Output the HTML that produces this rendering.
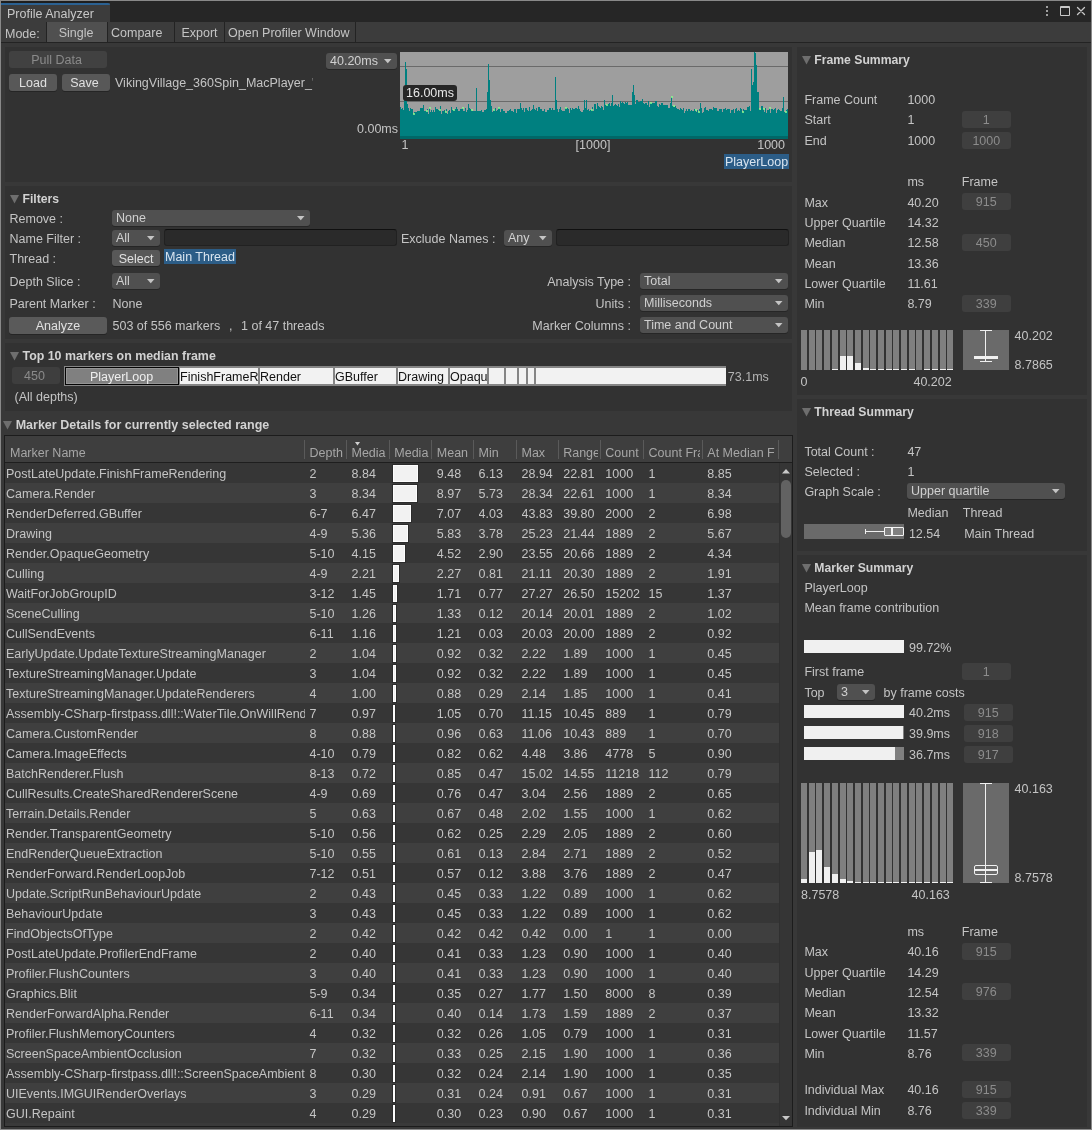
<!DOCTYPE html><html><head><meta charset="utf-8"><style>
html,body{margin:0;padding:0;}
body{width:1092px;height:1130px;position:relative;overflow:hidden;background:#383838;font-family:"Liberation Sans",sans-serif;}
.t{position:absolute;white-space:pre;line-height:14px;font-family:"Liberation Sans",sans-serif;}
body{will-change:transform;}
.r{position:absolute;}
</style></head><body>
<div class="r" style="left:0px;top:0px;width:1092px;height:1130px;background:#898989;"></div>
<div class="r" style="left:1px;top:1px;width:1090px;height:1128px;background:#383838;"></div>
<div class="r" style="left:1px;top:1px;width:1090px;height:21px;background:#262626;"></div>
<div class="r" style="left:1px;top:1px;width:109px;height:21px;background:#3c3c3c;"></div>
<div class="r" style="left:1px;top:1px;width:109px;height:2px;background:#1e1e1e;"></div>
<div class="r" style="left:1px;top:3px;width:109px;height:2px;background:#2b6192;border-top-right-radius:2px;"></div>
<div class="t" style="left:7px;top:6.67px;color:#c8c8c8;font-size:12.5px;">Profile Analyzer</div>
<div class="r" style="left:1046px;top:6px;width:2px;height:2px;background:#c8c8c8;border-radius:1px;"></div>
<div class="r" style="left:1046px;top:10px;width:2px;height:2px;background:#c8c8c8;border-radius:1px;"></div>
<div class="r" style="left:1046px;top:14px;width:2px;height:2px;background:#c8c8c8;border-radius:1px;"></div>
<div class="r" style="left:1060px;top:6px;width:10px;height:10px;background:transparent;box-sizing:border-box;border:1px solid #c8c8c8;border-top-width:2px;border-radius:1px;"></div>
<svg style="position:absolute;left:1076px;top:6px" width="10" height="10"><path d="M1.5 1.5L8.5 8.5M8.5 1.5L1.5 8.5" stroke="#c8c8c8" stroke-width="1.3" stroke-linecap="round"/></svg>
<div class="r" style="left:1px;top:22px;width:1090px;height:20px;background:#3c3c3c;"></div>
<div class="r" style="left:1px;top:42px;width:1090px;height:1px;background:#232323;"></div>
<div class="t" style="left:5px;top:26.67px;color:#c4c4c4;font-size:12.5px;">Mode:</div>
<div class="r" style="left:47px;top:22px;width:60px;height:20px;background:#505050;"></div>
<div class="r" style="left:46px;top:22px;width:1px;height:20px;background:#232323;"></div>
<div class="r" style="left:107px;top:22px;width:1px;height:20px;background:#232323;"></div>
<div class="r" style="left:174px;top:22px;width:1px;height:20px;background:#232323;"></div>
<div class="r" style="left:224px;top:22px;width:1px;height:20px;background:#232323;"></div>
<div class="r" style="left:355px;top:22px;width:1px;height:20px;background:#232323;"></div>
<div class="t" style="left:46.0px;width:60px;text-align:center;top:25.67px;color:#c4c4c4;font-size:12.5px;">Single</div>
<div class="t" style="left:111px;top:25.67px;color:#c4c4c4;font-size:12.5px;">Compare</div>
<div class="t" style="left:181.4px;top:25.67px;color:#c4c4c4;font-size:12.5px;">Export</div>
<div class="t" style="left:228px;top:25.67px;color:#c4c4c4;font-size:12.5px;">Open Profiler Window</div>
<div class="r" style="left:5px;top:47px;width:787px;height:135px;background:#323232;"></div>
<div class="r" style="left:5px;top:186px;width:787px;height:153px;background:#323232;"></div>
<div class="r" style="left:5px;top:343px;width:787px;height:68px;background:#323232;"></div>
<div class="r" style="left:9px;top:51px;width:98px;height:17px;background:#414141;border-radius:3px;"></div>
<div class="t" style="left:7.5px;width:98px;text-align:center;top:53.27px;color:#8a8a8a;font-size:12.5px;">Pull Data</div>
<div class="r" style="left:9px;top:74px;width:48px;height:17px;background:#585858;border-radius:3px;box-shadow:0 1px 0 #252525;"></div>
<div class="t" style="left:9.0px;width:48px;text-align:center;top:76.37px;color:#e0e0e0;font-size:12.5px;">Load</div>
<div class="r" style="left:62px;top:74px;width:48px;height:17px;background:#585858;border-radius:3px;box-shadow:0 1px 0 #252525;"></div>
<div class="t" style="left:60.5px;width:48px;text-align:center;top:76.37px;color:#e0e0e0;font-size:12.5px;">Save</div>
<div class="r" style="left:115px;top:70px;width:198px;height:22px;overflow:hidden;"><div class="t" style="left:0;top:5.67px;color:#c4c4c4;font-size:12.5px;">VikingVillage_360Spin_MacPlayer_'s</div></div>
<div class="r" style="left:326px;top:53px;width:71px;height:16px;background:#505050;border-radius:3px;box-shadow:0 1px 0 #262626;"></div>
<div class="t" style="left:330px;top:54.17px;color:#d0d0d0;font-size:12.5px;">40.20ms</div>
<svg style="position:absolute;left:384px;top:59.0px" width="8" height="5"><path d="M0 0H7.5L3.75 4.2Z" fill="#c4c4c4"/></svg>
<div class="t" style="left:338px;width:60px;text-align:right;top:122.27px;color:#c4c4c4;font-size:12.5px;">0.00ms</div>
<div class="t" style="left:401.5px;top:138.27px;color:#c4c4c4;font-size:12.5px;">1</div>
<div class="t" style="left:563.0px;width:60px;text-align:center;top:137.67px;color:#c4c4c4;font-size:12.5px;">[1000]</div>
<div class="t" style="left:725px;width:60px;text-align:right;top:137.67px;color:#c4c4c4;font-size:12.5px;">1000</div>
<div class="r" style="left:724px;top:154px;width:65px;height:15px;background:#2c5d87;"></div>
<div class="t" style="left:724.0px;width:65px;text-align:center;top:155.17px;color:#d8e4ef;font-size:12.5px;">PlayerLoop</div>
<div class="r" style="left:400px;top:52px;width:388px;height:87px;background:#9e9e9e;"></div>
<div class="r" style="left:400px;top:66px;width:388px;height:1px;background:#6a6a6a;"></div>
<div class="r" style="left:400px;top:101px;width:388px;height:1px;background:#6a6a6a;"></div>
<svg style="position:absolute;left:0;top:0" width="1092" height="1130"><path d="M400 139V107H401V109H402V108H403V110H404V100H405V62H406V69H407V104H408V108H409V111H410V108H411V109H412V109H413V114H414V112H415V112H416V112H417V111H418V111H419V111H420V108H421V108H422V108H423V105H424V111H425V111H426V111H427V109H428V114H429V108H430V112H431V110H432V112H433V110H434V112H435V107H436V109H437V109H438V110H439V110H440V106H441V114H442V111H443V111H444V110H445V112H446V109H447V114H448V111H449V110H450V113H451V107H452V110H453V110H454V109H455V109H456V107H457V109H458V111H459V111H460V109H461V109H462V108H463V111H464V111H465V108H466V112H467V110H468V104H469V108H470V109H471V110H472V111H473V111H474V111H475V111H476V88H477V111H478V111H479V111H480V111H481V110H482V112H483V112H484V110H485V110H486V109H487V92H488V64H489V80H490V100H491V106H492V112H493V110H494V109H495V108H496V111H497V110H498V108H499V108H500V112H501V109H502V109H503V111H504V111H505V113H506V113H507V111H508V111H509V110H510V109H511V111H512V111H513V112H514V109H515V109H516V113H517V109H518V109H519V109H520V103H521V108H522V110H523V108H524V112H525V108H526V108H527V110H528V111H529V107H530V111H531V110H532V109H533V105H534V109H535V110H536V108H537V111H538V107H539V107H540V109H541V109H542V111H543V111H544V109H545V112H546V112H547V110H548V110H549V108H550V108H551V110H552V108H553V110H554V110H555V77H556V100H557V109H558V112H559V109H560V107H561V110H562V111H563V111H564V111H565V108H566V108H567V108H568V109H569V113H570V108H571V110H572V108H573V109H574V109H575V108H576V108H577V109H578V106H579V109H580V111H581V112H582V112H583V110H584V100H585V108H586V100H587V110H588V109H589V111H590V110H591V110H592V107H593V111H594V104H595V104H596V109H597V103H598V106H599V107H600V108H601V106H602V107H603V110H604V100H605V105H606V105H607V104H608V104H609V103H610V106H611V103H612V95H613V106H614V105H615V104H616V105H617V106H618V104H619V107H620V101H621V103H622V102H623V103H624V104H625V102H626V103H627V102H628V105H629V105H630V105H631V105H632V92H633V85H634V95H635V104H636V100H637V100H638V102H639V102H640V101H641V101H642V99H643V103H644V104H645V103H646V103H647V105H648V101H649V107H650V103H651V103H652V103H653V103H654V103H655V101H656V101H657V106H658V107H659V104H660V105H661V103H662V103H663V105H664V105H665V105H666V105H667V105H668V108H669V108H670V103H671V97H672V106H673V106H674V107H675V106H676V108H677V109H678V109H679V110H680V108H681V109H682V110H683V108H684V113H685V111H686V109H687V111H688V109H689V109H690V111H691V110H692V111H693V111H694V109H695V110H696V112H697V110H698V112H699V109H700V103H701V108H702V113H703V112H704V108H705V107H706V110H707V110H708V111H709V109H710V109H711V109H712V110H713V107H714V108H715V108H716V108H717V111H718V111H719V109H720V109H721V109H722V112H723V109H724V109H725V108H726V110H727V109H728V109H729V109H730V113H731V110H732V110H733V109H734V113H735V109H736V108H737V111H738V110H739V111H740V108H741V109H742V112H743V109H744V110H745V110H746V110H747V107H748V107H749V106H750V111H751V69H752V85H753V82H754V52H755V53H756V65H757V92H758V92H759V109H760V110H761V106H762V106H763V109H764V112H765V108H766V113H767V110H768V110H769V108H770V113H771V109H772V109H773V110H774V109H775V108H776V113H777V110H778V109H779V110H780V111H781V111H782V108H783V97H784V112H785V112H786V110H787V109H788V139Z" fill="#008080" shape-rendering="crispEdges"/></svg>
<div class="r" style="left:400px;top:136px;width:388px;height:3px;background:#006868;"></div>
<div class="r" style="left:413px;top:113px;width:1.5px;height:1.5px;background:#8cff8c;border-radius:1px;"></div>
<div class="r" style="left:426px;top:110px;width:1.5px;height:1.5px;background:#8cff8c;border-radius:1px;"></div>
<div class="r" style="left:429px;top:107px;width:1.5px;height:1.5px;background:#8cff8c;border-radius:1px;"></div>
<div class="r" style="left:439px;top:109px;width:1.5px;height:1.5px;background:#8cff8c;border-radius:1px;"></div>
<div class="r" style="left:445px;top:111px;width:1.5px;height:1.5px;background:#8cff8c;border-radius:1px;"></div>
<div class="r" style="left:453px;top:109px;width:1.5px;height:1.5px;background:#8cff8c;border-radius:1px;"></div>
<div class="r" style="left:462px;top:107px;width:1.5px;height:1.5px;background:#8cff8c;border-radius:1px;"></div>
<div class="r" style="left:471px;top:109px;width:1.5px;height:1.5px;background:#8cff8c;border-radius:1px;"></div>
<div class="r" style="left:493px;top:109px;width:1.5px;height:1.5px;background:#8cff8c;border-radius:1px;"></div>
<div class="r" style="left:498px;top:107px;width:1.5px;height:1.5px;background:#8cff8c;border-radius:1px;"></div>
<div class="r" style="left:565px;top:107px;width:1.5px;height:1.5px;background:#8cff8c;border-radius:1px;"></div>
<div class="r" style="left:591px;top:109px;width:1.5px;height:1.5px;background:#8cff8c;border-radius:1px;"></div>
<div class="r" style="left:606px;top:104px;width:1.5px;height:1.5px;background:#8cff8c;border-radius:1px;"></div>
<div class="r" style="left:650px;top:102px;width:1.5px;height:1.5px;background:#8cff8c;border-radius:1px;"></div>
<div class="r" style="left:671px;top:96px;width:1.5px;height:1.5px;background:#8cff8c;border-radius:1px;"></div>
<div class="r" style="left:673px;top:105px;width:1.5px;height:1.5px;background:#8cff8c;border-radius:1px;"></div>
<div class="r" style="left:695px;top:109px;width:1.5px;height:1.5px;background:#8cff8c;border-radius:1px;"></div>
<div class="r" style="left:698px;top:111px;width:1.5px;height:1.5px;background:#8cff8c;border-radius:1px;"></div>
<div class="r" style="left:742px;top:111px;width:1.5px;height:1.5px;background:#8cff8c;border-radius:1px;"></div>
<div class="r" style="left:759px;top:108px;width:1.5px;height:1.5px;background:#8cff8c;border-radius:1px;"></div>
<div class="r" style="left:763px;top:108px;width:1.5px;height:1.5px;background:#8cff8c;border-radius:1px;"></div>
<div class="r" style="left:769px;top:107px;width:1.5px;height:1.5px;background:#8cff8c;border-radius:1px;"></div>
<div class="r" style="left:785px;top:111px;width:1.5px;height:1.5px;background:#8cff8c;border-radius:1px;"></div>
<div class="r" style="left:403px;top:85px;width:54px;height:16px;background:#262626;border-radius:3px;"></div>
<div class="t" style="left:403.0px;width:54px;text-align:center;top:85.67px;color:#e8e8e8;font-size:12.5px;">16.00ms</div>
<svg style="position:absolute;left:10px;top:195px" width="10" height="9"><path d="M0 0H9L4.5 8.5Z" fill="#6e6e6e"/></svg>
<div class="t" style="left:22.5px;top:191.57px;color:#d2d2d2;font-size:12.2px;font-weight:700;">Filters</div>
<div class="t" style="left:9.5px;top:212.27px;color:#c4c4c4;font-size:12.5px;">Remove :</div>
<div class="r" style="left:112px;top:210px;width:198px;height:16px;background:#505050;border-radius:3px;box-shadow:0 1px 0 #262626;"></div>
<div class="t" style="left:116px;top:211.17px;color:#d0d0d0;font-size:12.5px;">None</div>
<svg style="position:absolute;left:297px;top:216.0px" width="8" height="5"><path d="M0 0H7.5L3.75 4.2Z" fill="#c4c4c4"/></svg>
<div class="t" style="left:9.5px;top:232.37px;color:#c4c4c4;font-size:12.5px;">Name Filter :</div>
<div class="r" style="left:112px;top:230px;width:48px;height:16px;background:#505050;border-radius:3px;box-shadow:0 1px 0 #262626;"></div>
<div class="t" style="left:116px;top:231.17px;color:#d0d0d0;font-size:12.5px;">All</div>
<svg style="position:absolute;left:147px;top:236.0px" width="8" height="5"><path d="M0 0H7.5L3.75 4.2Z" fill="#c4c4c4"/></svg>
<div class="r" style="left:164px;top:229px;width:233px;height:17px;background:#2a2a2a;box-sizing:border-box;border:1px solid #212121;border-top-color:#101010;border-radius:3px;"></div>
<div class="t" style="left:401px;top:231.67px;color:#c4c4c4;font-size:12.5px;">Exclude Names :</div>
<div class="r" style="left:504px;top:230px;width:48px;height:16px;background:#505050;border-radius:3px;box-shadow:0 1px 0 #262626;"></div>
<div class="t" style="left:508px;top:231.17px;color:#d0d0d0;font-size:12.5px;">Any</div>
<svg style="position:absolute;left:539px;top:236.0px" width="8" height="5"><path d="M0 0H7.5L3.75 4.2Z" fill="#c4c4c4"/></svg>
<div class="r" style="left:556px;top:229px;width:233px;height:17px;background:#2a2a2a;box-sizing:border-box;border:1px solid #212121;border-top-color:#101010;border-radius:3px;"></div>
<div class="t" style="left:9.5px;top:251.87px;color:#c4c4c4;font-size:12.5px;">Thread :</div>
<div class="r" style="left:112px;top:250px;width:48px;height:16px;background:#585858;border-radius:3px;box-shadow:0 1px 0 #252525;"></div>
<div class="t" style="left:112.0px;width:48px;text-align:center;top:252.17px;color:#e0e0e0;font-size:12.5px;">Select</div>
<div class="r" style="left:164px;top:249px;width:72px;height:15px;background:#2c5d87;"></div>
<div class="t" style="left:165px;top:250.17px;color:#d8e4ef;font-size:12.5px;">Main Thread</div>
<div class="t" style="left:9.5px;top:274.87px;color:#c4c4c4;font-size:12.5px;">Depth Slice :</div>
<div class="r" style="left:112px;top:273px;width:48px;height:16px;background:#505050;border-radius:3px;box-shadow:0 1px 0 #262626;"></div>
<div class="t" style="left:116px;top:273.67px;color:#d0d0d0;font-size:12.5px;">All</div>
<svg style="position:absolute;left:147px;top:279.0px" width="8" height="5"><path d="M0 0H7.5L3.75 4.2Z" fill="#c4c4c4"/></svg>
<div class="t" style="left:9.5px;top:297.37px;color:#c4c4c4;font-size:12.5px;">Parent Marker :</div>
<div class="t" style="left:112.5px;top:297.37px;color:#c4c4c4;font-size:12.5px;">None</div>
<div class="r" style="left:9px;top:317px;width:98px;height:17px;background:#5a5a5a;border-radius:3px;box-shadow:0 1px 0 #252525;"></div>
<div class="t" style="left:9.0px;width:98px;text-align:center;top:318.67px;color:#e0e0e0;font-size:12.5px;">Analyze</div>
<div class="t" style="left:112.5px;top:318.67px;color:#c4c4c4;font-size:12.5px;">503 of 556 markers</div>
<div class="t" style="left:229px;top:318.67px;color:#c4c4c4;font-size:12.5px;">,</div>
<div class="t" style="left:241px;top:318.67px;color:#c4c4c4;font-size:12.5px;">1 of 47 threads</div>
<div class="t" style="left:511px;width:120px;text-align:right;top:274.67px;color:#c4c4c4;font-size:12.5px;">Analysis Type :</div>
<div class="r" style="left:640px;top:273px;width:148px;height:16px;background:#505050;border-radius:3px;box-shadow:0 1px 0 #262626;"></div>
<div class="t" style="left:644px;top:273.67px;color:#d0d0d0;font-size:12.5px;">Total</div>
<svg style="position:absolute;left:775px;top:279.0px" width="8" height="5"><path d="M0 0H7.5L3.75 4.2Z" fill="#c4c4c4"/></svg>
<div class="t" style="left:511px;width:120px;text-align:right;top:296.67px;color:#c4c4c4;font-size:12.5px;">Units :</div>
<div class="r" style="left:640px;top:295px;width:148px;height:16px;background:#505050;border-radius:3px;box-shadow:0 1px 0 #262626;"></div>
<div class="t" style="left:644px;top:295.67px;color:#d0d0d0;font-size:12.5px;">Milliseconds</div>
<svg style="position:absolute;left:775px;top:301.0px" width="8" height="5"><path d="M0 0H7.5L3.75 4.2Z" fill="#c4c4c4"/></svg>
<div class="t" style="left:511px;width:120px;text-align:right;top:318.67px;color:#c4c4c4;font-size:12.5px;">Marker Columns :</div>
<div class="r" style="left:640px;top:317px;width:148px;height:16px;background:#505050;border-radius:3px;box-shadow:0 1px 0 #262626;"></div>
<div class="t" style="left:644px;top:317.67px;color:#d0d0d0;font-size:12.5px;">Time and Count</div>
<svg style="position:absolute;left:775px;top:323.0px" width="8" height="5"><path d="M0 0H7.5L3.75 4.2Z" fill="#c4c4c4"/></svg>
<svg style="position:absolute;left:10px;top:352px" width="10" height="9"><path d="M0 0H9L4.5 8.5Z" fill="#6e6e6e"/></svg>
<div class="t" style="left:22.5px;top:348.70px;color:#d2d2d2;font-size:12.4px;font-weight:700;">Top 10 markers on median frame</div>
<div class="r" style="left:12px;top:367px;width:48px;height:17px;background:#3e3e3e;border-radius:3px;"></div>
<div class="t" style="left:10.5px;width:48px;text-align:center;top:369.17px;color:#8a8a8a;font-size:12.5px;">450</div>
<div class="r" style="left:64px;top:366px;width:662px;height:20px;background:#858585;"></div>
<div class="r" style="left:65px;top:367px;width:114px;height:18px;background:#050505;"></div>
<div class="r" style="left:66px;top:368px;width:112px;height:16px;background:#959595;"></div>
<div class="r" style="left:67px;top:369px;width:110px;height:14px;background:#808080;"></div>
<div class="t" style="left:64.0px;width:115px;text-align:center;top:370.17px;color:#eeeeee;font-size:12.5px;">PlayerLoop</div>
<div class="r" style="left:180px;top:368px;width:78px;height:16px;background:#f2f2f2;overflow:hidden;"><div class="t" style="left:0px;top:2px;color:#111;font-size:12.5px;">FinishFrameR</div></div>
<div class="r" style="left:260px;top:368px;width:73px;height:16px;background:#f2f2f2;overflow:hidden;"><div class="t" style="left:0px;top:2px;color:#111;font-size:12.5px;">Render</div></div>
<div class="r" style="left:335px;top:368px;width:61px;height:16px;background:#f2f2f2;overflow:hidden;"><div class="t" style="left:0px;top:2px;color:#111;font-size:12.5px;">GBuffer</div></div>
<div class="r" style="left:398px;top:368px;width:50px;height:16px;background:#f2f2f2;overflow:hidden;"><div class="t" style="left:0px;top:2px;color:#111;font-size:12.5px;">Drawing</div></div>
<div class="r" style="left:450px;top:368px;width:37px;height:16px;background:#f2f2f2;overflow:hidden;"><div class="t" style="left:0px;top:2px;color:#111;font-size:12.5px;">Opaqu</div></div>
<div class="r" style="left:489px;top:368px;width:15px;height:16px;background:#f2f2f2;overflow:hidden;"><div class="t" style="left:0px;top:2px;color:#111;font-size:12.5px;"></div></div>
<div class="r" style="left:506px;top:368px;width:11px;height:16px;background:#f2f2f2;overflow:hidden;"><div class="t" style="left:0px;top:2px;color:#111;font-size:12.5px;"></div></div>
<div class="r" style="left:519px;top:368px;width:7px;height:16px;background:#f2f2f2;overflow:hidden;"><div class="t" style="left:0px;top:2px;color:#111;font-size:12.5px;"></div></div>
<div class="r" style="left:528px;top:368px;width:6px;height:16px;background:#f2f2f2;overflow:hidden;"><div class="t" style="left:0px;top:2px;color:#111;font-size:12.5px;"></div></div>
<div class="r" style="left:536px;top:368px;width:190px;height:16px;background:#f2f2f2;overflow:hidden;"><div class="t" style="left:0px;top:2px;color:#111;font-size:12.5px;"></div></div>
<div class="t" style="left:727.8px;top:369.67px;color:#b4b4b4;font-size:12.5px;">73.1ms</div>
<div class="t" style="left:14.5px;top:390.17px;color:#c4c4c4;font-size:12.5px;">(All depths)</div>
<svg style="position:absolute;left:3px;top:421px" width="10" height="9"><path d="M0 0H9L4.5 8.5Z" fill="#6e6e6e"/></svg>
<div class="t" style="left:15.7px;top:417.67px;color:#d2d2d2;font-size:12.5px;font-weight:700;">Marker Details for currently selected range</div>
<div class="r" style="left:4px;top:435px;width:789px;height:692px;background:#1c1c1c;"></div>
<div class="r" style="left:5px;top:436px;width:787px;height:26px;background:#3e3e3e;"></div>
<div class="r" style="left:5px;top:462px;width:787px;height:1px;background:#1e1e1e;"></div>
<div class="r" style="left:10px;top:444px;width:291.9px;height:16px;overflow:hidden;"><div class="t" style="left:0;top:1.67px;color:#a6a6a6;font-size:12.5px;">Marker Name</div></div>
<div class="r" style="left:309.5px;top:444px;width:34.4px;height:16px;overflow:hidden;"><div class="t" style="left:0;top:1.67px;color:#a6a6a6;font-size:12.5px;">Depth</div></div>
<div class="r" style="left:351.5px;top:444px;width:35.4px;height:16px;overflow:hidden;"><div class="t" style="left:0;top:1.67px;color:#a6a6a6;font-size:12.5px;">Media</div></div>
<div class="r" style="left:394.3px;top:444px;width:34.6px;height:16px;overflow:hidden;"><div class="t" style="left:0;top:1.67px;color:#a6a6a6;font-size:12.5px;">Media</div></div>
<div class="r" style="left:436.8px;top:444px;width:34.1px;height:16px;overflow:hidden;"><div class="t" style="left:0;top:1.67px;color:#a6a6a6;font-size:12.5px;">Mean</div></div>
<div class="r" style="left:478.5px;top:444px;width:35.4px;height:16px;overflow:hidden;"><div class="t" style="left:0;top:1.67px;color:#a6a6a6;font-size:12.5px;">Min</div></div>
<div class="r" style="left:521.5px;top:444px;width:34.4px;height:16px;overflow:hidden;"><div class="t" style="left:0;top:1.67px;color:#a6a6a6;font-size:12.5px;">Max</div></div>
<div class="r" style="left:563.2px;top:444px;width:34.7px;height:16px;overflow:hidden;"><div class="t" style="left:0;top:1.67px;color:#a6a6a6;font-size:12.5px;">Range</div></div>
<div class="r" style="left:605.3px;top:444px;width:35.6px;height:16px;overflow:hidden;"><div class="t" style="left:0;top:1.67px;color:#a6a6a6;font-size:12.5px;">Count</div></div>
<div class="r" style="left:648.6px;top:444px;width:51.3px;height:16px;overflow:hidden;"><div class="t" style="left:0;top:1.67px;color:#a6a6a6;font-size:12.5px;">Count Fra</div></div>
<div class="r" style="left:707.3px;top:444px;width:68.6px;height:16px;overflow:hidden;"><div class="t" style="left:0;top:1.67px;color:#a6a6a6;font-size:12.5px;">At Median F</div></div>
<div class="r" style="left:304px;top:440px;width:1px;height:19px;background:#5a5a5a;"></div>
<div class="r" style="left:346px;top:440px;width:1px;height:19px;background:#5a5a5a;"></div>
<div class="r" style="left:389px;top:440px;width:1px;height:19px;background:#5a5a5a;"></div>
<div class="r" style="left:431px;top:440px;width:1px;height:19px;background:#5a5a5a;"></div>
<div class="r" style="left:473px;top:440px;width:1px;height:19px;background:#5a5a5a;"></div>
<div class="r" style="left:516px;top:440px;width:1px;height:19px;background:#5a5a5a;"></div>
<div class="r" style="left:558px;top:440px;width:1px;height:19px;background:#5a5a5a;"></div>
<div class="r" style="left:600px;top:440px;width:1px;height:19px;background:#5a5a5a;"></div>
<div class="r" style="left:643px;top:440px;width:1px;height:19px;background:#5a5a5a;"></div>
<div class="r" style="left:702px;top:440px;width:1px;height:19px;background:#5a5a5a;"></div>
<div class="r" style="left:778px;top:440px;width:1px;height:19px;background:#5a5a5a;"></div>
<svg style="position:absolute;left:354.5px;top:442px" width="6" height="5"><path d="M0 0H5L2.5 3.5Z" fill="#d0d0d0"/></svg>
<div class="r" style="left:5px;top:463px;width:787px;height:663px;background:#3a3a3a;"></div>
<div class="r" style="left:5px;top:463px;width:774px;height:20px;background:#363636;"></div>
<div class="r" style="left:6px;top:463px;width:299px;height:20px;overflow:hidden;"><div class="t" style="left:0;top:3.67px;color:#c4c4c4;font-size:12.5px;">PostLateUpdate.FinishFrameRendering</div></div>
<div class="t" style="left:309.5px;top:466.67px;color:#c4c4c4;font-size:12.5px;">2</div>
<div class="t" style="left:351.5px;top:466.67px;color:#c4c4c4;font-size:12.5px;">8.84</div>
<div class="r" style="left:393px;top:465px;width:25px;height:17px;background:#f2f2f2;box-sizing:border-box;border:1px solid #fdfdfd;box-shadow:0 0 0 1px #2c2c2c;"></div>
<div class="r" style="left:436.8px;top:463px;width:33.1px;height:20px;overflow:hidden;"><div class="t" style="left:0;top:3.67px;color:#c4c4c4;font-size:12.5px;">9.48</div></div>
<div class="r" style="left:478.5px;top:463px;width:34.4px;height:20px;overflow:hidden;"><div class="t" style="left:0;top:3.67px;color:#c4c4c4;font-size:12.5px;">6.13</div></div>
<div class="r" style="left:521.5px;top:463px;width:33.4px;height:20px;overflow:hidden;"><div class="t" style="left:0;top:3.67px;color:#c4c4c4;font-size:12.5px;">28.94</div></div>
<div class="r" style="left:563.2px;top:463px;width:33.7px;height:20px;overflow:hidden;"><div class="t" style="left:0;top:3.67px;color:#c4c4c4;font-size:12.5px;">22.81</div></div>
<div class="r" style="left:605.3px;top:463px;width:34.6px;height:20px;overflow:hidden;"><div class="t" style="left:0;top:3.67px;color:#c4c4c4;font-size:12.5px;">1000</div></div>
<div class="r" style="left:648.6px;top:463px;width:50.3px;height:20px;overflow:hidden;"><div class="t" style="left:0;top:3.67px;color:#c4c4c4;font-size:12.5px;">1</div></div>
<div class="r" style="left:707.3px;top:463px;width:67.6px;height:20px;overflow:hidden;"><div class="t" style="left:0;top:3.67px;color:#c4c4c4;font-size:12.5px;">8.85</div></div>
<div class="r" style="left:5px;top:483px;width:774px;height:20px;background:#3f3f3f;"></div>
<div class="r" style="left:6px;top:483px;width:299px;height:20px;overflow:hidden;"><div class="t" style="left:0;top:3.67px;color:#c4c4c4;font-size:12.5px;">Camera.Render</div></div>
<div class="t" style="left:309.5px;top:486.67px;color:#c4c4c4;font-size:12.5px;">3</div>
<div class="t" style="left:351.5px;top:486.67px;color:#c4c4c4;font-size:12.5px;">8.34</div>
<div class="r" style="left:393px;top:485px;width:24px;height:17px;background:#f2f2f2;box-sizing:border-box;border:1px solid #fdfdfd;box-shadow:0 0 0 1px #2c2c2c;"></div>
<div class="r" style="left:436.8px;top:483px;width:33.1px;height:20px;overflow:hidden;"><div class="t" style="left:0;top:3.67px;color:#c4c4c4;font-size:12.5px;">8.97</div></div>
<div class="r" style="left:478.5px;top:483px;width:34.4px;height:20px;overflow:hidden;"><div class="t" style="left:0;top:3.67px;color:#c4c4c4;font-size:12.5px;">5.73</div></div>
<div class="r" style="left:521.5px;top:483px;width:33.4px;height:20px;overflow:hidden;"><div class="t" style="left:0;top:3.67px;color:#c4c4c4;font-size:12.5px;">28.34</div></div>
<div class="r" style="left:563.2px;top:483px;width:33.7px;height:20px;overflow:hidden;"><div class="t" style="left:0;top:3.67px;color:#c4c4c4;font-size:12.5px;">22.61</div></div>
<div class="r" style="left:605.3px;top:483px;width:34.6px;height:20px;overflow:hidden;"><div class="t" style="left:0;top:3.67px;color:#c4c4c4;font-size:12.5px;">1000</div></div>
<div class="r" style="left:648.6px;top:483px;width:50.3px;height:20px;overflow:hidden;"><div class="t" style="left:0;top:3.67px;color:#c4c4c4;font-size:12.5px;">1</div></div>
<div class="r" style="left:707.3px;top:483px;width:67.6px;height:20px;overflow:hidden;"><div class="t" style="left:0;top:3.67px;color:#c4c4c4;font-size:12.5px;">8.34</div></div>
<div class="r" style="left:5px;top:503px;width:774px;height:20px;background:#363636;"></div>
<div class="r" style="left:6px;top:503px;width:299px;height:20px;overflow:hidden;"><div class="t" style="left:0;top:3.67px;color:#c4c4c4;font-size:12.5px;">RenderDeferred.GBuffer</div></div>
<div class="t" style="left:309.5px;top:506.67px;color:#c4c4c4;font-size:12.5px;">6-7</div>
<div class="t" style="left:351.5px;top:506.67px;color:#c4c4c4;font-size:12.5px;">6.47</div>
<div class="r" style="left:393px;top:505px;width:18px;height:17px;background:#f2f2f2;box-sizing:border-box;border:1px solid #fdfdfd;box-shadow:0 0 0 1px #2c2c2c;"></div>
<div class="r" style="left:436.8px;top:503px;width:33.1px;height:20px;overflow:hidden;"><div class="t" style="left:0;top:3.67px;color:#c4c4c4;font-size:12.5px;">7.07</div></div>
<div class="r" style="left:478.5px;top:503px;width:34.4px;height:20px;overflow:hidden;"><div class="t" style="left:0;top:3.67px;color:#c4c4c4;font-size:12.5px;">4.03</div></div>
<div class="r" style="left:521.5px;top:503px;width:33.4px;height:20px;overflow:hidden;"><div class="t" style="left:0;top:3.67px;color:#c4c4c4;font-size:12.5px;">43.83</div></div>
<div class="r" style="left:563.2px;top:503px;width:33.7px;height:20px;overflow:hidden;"><div class="t" style="left:0;top:3.67px;color:#c4c4c4;font-size:12.5px;">39.80</div></div>
<div class="r" style="left:605.3px;top:503px;width:34.6px;height:20px;overflow:hidden;"><div class="t" style="left:0;top:3.67px;color:#c4c4c4;font-size:12.5px;">2000</div></div>
<div class="r" style="left:648.6px;top:503px;width:50.3px;height:20px;overflow:hidden;"><div class="t" style="left:0;top:3.67px;color:#c4c4c4;font-size:12.5px;">2</div></div>
<div class="r" style="left:707.3px;top:503px;width:67.6px;height:20px;overflow:hidden;"><div class="t" style="left:0;top:3.67px;color:#c4c4c4;font-size:12.5px;">6.98</div></div>
<div class="r" style="left:5px;top:523px;width:774px;height:20px;background:#3f3f3f;"></div>
<div class="r" style="left:6px;top:523px;width:299px;height:20px;overflow:hidden;"><div class="t" style="left:0;top:3.67px;color:#c4c4c4;font-size:12.5px;">Drawing</div></div>
<div class="t" style="left:309.5px;top:526.67px;color:#c4c4c4;font-size:12.5px;">4-9</div>
<div class="t" style="left:351.5px;top:526.67px;color:#c4c4c4;font-size:12.5px;">5.36</div>
<div class="r" style="left:393px;top:525px;width:15px;height:17px;background:#f2f2f2;box-sizing:border-box;border:1px solid #fdfdfd;box-shadow:0 0 0 1px #2c2c2c;"></div>
<div class="r" style="left:436.8px;top:523px;width:33.1px;height:20px;overflow:hidden;"><div class="t" style="left:0;top:3.67px;color:#c4c4c4;font-size:12.5px;">5.83</div></div>
<div class="r" style="left:478.5px;top:523px;width:34.4px;height:20px;overflow:hidden;"><div class="t" style="left:0;top:3.67px;color:#c4c4c4;font-size:12.5px;">3.78</div></div>
<div class="r" style="left:521.5px;top:523px;width:33.4px;height:20px;overflow:hidden;"><div class="t" style="left:0;top:3.67px;color:#c4c4c4;font-size:12.5px;">25.23</div></div>
<div class="r" style="left:563.2px;top:523px;width:33.7px;height:20px;overflow:hidden;"><div class="t" style="left:0;top:3.67px;color:#c4c4c4;font-size:12.5px;">21.44</div></div>
<div class="r" style="left:605.3px;top:523px;width:34.6px;height:20px;overflow:hidden;"><div class="t" style="left:0;top:3.67px;color:#c4c4c4;font-size:12.5px;">1889</div></div>
<div class="r" style="left:648.6px;top:523px;width:50.3px;height:20px;overflow:hidden;"><div class="t" style="left:0;top:3.67px;color:#c4c4c4;font-size:12.5px;">2</div></div>
<div class="r" style="left:707.3px;top:523px;width:67.6px;height:20px;overflow:hidden;"><div class="t" style="left:0;top:3.67px;color:#c4c4c4;font-size:12.5px;">5.67</div></div>
<div class="r" style="left:5px;top:543px;width:774px;height:20px;background:#363636;"></div>
<div class="r" style="left:6px;top:543px;width:299px;height:20px;overflow:hidden;"><div class="t" style="left:0;top:3.67px;color:#c4c4c4;font-size:12.5px;">Render.OpaqueGeometry</div></div>
<div class="t" style="left:309.5px;top:546.67px;color:#c4c4c4;font-size:12.5px;">5-10</div>
<div class="t" style="left:351.5px;top:546.67px;color:#c4c4c4;font-size:12.5px;">4.15</div>
<div class="r" style="left:393px;top:545px;width:12px;height:17px;background:#f2f2f2;box-sizing:border-box;border:1px solid #fdfdfd;box-shadow:0 0 0 1px #2c2c2c;"></div>
<div class="r" style="left:436.8px;top:543px;width:33.1px;height:20px;overflow:hidden;"><div class="t" style="left:0;top:3.67px;color:#c4c4c4;font-size:12.5px;">4.52</div></div>
<div class="r" style="left:478.5px;top:543px;width:34.4px;height:20px;overflow:hidden;"><div class="t" style="left:0;top:3.67px;color:#c4c4c4;font-size:12.5px;">2.90</div></div>
<div class="r" style="left:521.5px;top:543px;width:33.4px;height:20px;overflow:hidden;"><div class="t" style="left:0;top:3.67px;color:#c4c4c4;font-size:12.5px;">23.55</div></div>
<div class="r" style="left:563.2px;top:543px;width:33.7px;height:20px;overflow:hidden;"><div class="t" style="left:0;top:3.67px;color:#c4c4c4;font-size:12.5px;">20.66</div></div>
<div class="r" style="left:605.3px;top:543px;width:34.6px;height:20px;overflow:hidden;"><div class="t" style="left:0;top:3.67px;color:#c4c4c4;font-size:12.5px;">1889</div></div>
<div class="r" style="left:648.6px;top:543px;width:50.3px;height:20px;overflow:hidden;"><div class="t" style="left:0;top:3.67px;color:#c4c4c4;font-size:12.5px;">2</div></div>
<div class="r" style="left:707.3px;top:543px;width:67.6px;height:20px;overflow:hidden;"><div class="t" style="left:0;top:3.67px;color:#c4c4c4;font-size:12.5px;">4.34</div></div>
<div class="r" style="left:5px;top:563px;width:774px;height:20px;background:#3f3f3f;"></div>
<div class="r" style="left:6px;top:563px;width:299px;height:20px;overflow:hidden;"><div class="t" style="left:0;top:3.67px;color:#c4c4c4;font-size:12.5px;">Culling</div></div>
<div class="t" style="left:309.5px;top:566.67px;color:#c4c4c4;font-size:12.5px;">4-9</div>
<div class="t" style="left:351.5px;top:566.67px;color:#c4c4c4;font-size:12.5px;">2.21</div>
<div class="r" style="left:393px;top:565px;width:6px;height:17px;background:#f2f2f2;box-sizing:border-box;border:1px solid #fdfdfd;box-shadow:0 0 0 1px #2c2c2c;"></div>
<div class="r" style="left:436.8px;top:563px;width:33.1px;height:20px;overflow:hidden;"><div class="t" style="left:0;top:3.67px;color:#c4c4c4;font-size:12.5px;">2.27</div></div>
<div class="r" style="left:478.5px;top:563px;width:34.4px;height:20px;overflow:hidden;"><div class="t" style="left:0;top:3.67px;color:#c4c4c4;font-size:12.5px;">0.81</div></div>
<div class="r" style="left:521.5px;top:563px;width:33.4px;height:20px;overflow:hidden;"><div class="t" style="left:0;top:3.67px;color:#c4c4c4;font-size:12.5px;">21.11</div></div>
<div class="r" style="left:563.2px;top:563px;width:33.7px;height:20px;overflow:hidden;"><div class="t" style="left:0;top:3.67px;color:#c4c4c4;font-size:12.5px;">20.30</div></div>
<div class="r" style="left:605.3px;top:563px;width:34.6px;height:20px;overflow:hidden;"><div class="t" style="left:0;top:3.67px;color:#c4c4c4;font-size:12.5px;">1889</div></div>
<div class="r" style="left:648.6px;top:563px;width:50.3px;height:20px;overflow:hidden;"><div class="t" style="left:0;top:3.67px;color:#c4c4c4;font-size:12.5px;">2</div></div>
<div class="r" style="left:707.3px;top:563px;width:67.6px;height:20px;overflow:hidden;"><div class="t" style="left:0;top:3.67px;color:#c4c4c4;font-size:12.5px;">1.91</div></div>
<div class="r" style="left:5px;top:583px;width:774px;height:20px;background:#363636;"></div>
<div class="r" style="left:6px;top:583px;width:299px;height:20px;overflow:hidden;"><div class="t" style="left:0;top:3.67px;color:#c4c4c4;font-size:12.5px;">WaitForJobGroupID</div></div>
<div class="t" style="left:309.5px;top:586.67px;color:#c4c4c4;font-size:12.5px;">3-12</div>
<div class="t" style="left:351.5px;top:586.67px;color:#c4c4c4;font-size:12.5px;">1.45</div>
<div class="r" style="left:393px;top:585px;width:4px;height:17px;background:#f2f2f2;box-sizing:border-box;border:1px solid #fdfdfd;box-shadow:0 0 0 1px #2c2c2c;"></div>
<div class="r" style="left:436.8px;top:583px;width:33.1px;height:20px;overflow:hidden;"><div class="t" style="left:0;top:3.67px;color:#c4c4c4;font-size:12.5px;">1.71</div></div>
<div class="r" style="left:478.5px;top:583px;width:34.4px;height:20px;overflow:hidden;"><div class="t" style="left:0;top:3.67px;color:#c4c4c4;font-size:12.5px;">0.77</div></div>
<div class="r" style="left:521.5px;top:583px;width:33.4px;height:20px;overflow:hidden;"><div class="t" style="left:0;top:3.67px;color:#c4c4c4;font-size:12.5px;">27.27</div></div>
<div class="r" style="left:563.2px;top:583px;width:33.7px;height:20px;overflow:hidden;"><div class="t" style="left:0;top:3.67px;color:#c4c4c4;font-size:12.5px;">26.50</div></div>
<div class="r" style="left:605.3px;top:583px;width:34.6px;height:20px;overflow:hidden;"><div class="t" style="left:0;top:3.67px;color:#c4c4c4;font-size:12.5px;">15202</div></div>
<div class="r" style="left:648.6px;top:583px;width:50.3px;height:20px;overflow:hidden;"><div class="t" style="left:0;top:3.67px;color:#c4c4c4;font-size:12.5px;">15</div></div>
<div class="r" style="left:707.3px;top:583px;width:67.6px;height:20px;overflow:hidden;"><div class="t" style="left:0;top:3.67px;color:#c4c4c4;font-size:12.5px;">1.37</div></div>
<div class="r" style="left:5px;top:603px;width:774px;height:20px;background:#3f3f3f;"></div>
<div class="r" style="left:6px;top:603px;width:299px;height:20px;overflow:hidden;"><div class="t" style="left:0;top:3.67px;color:#c4c4c4;font-size:12.5px;">SceneCulling</div></div>
<div class="t" style="left:309.5px;top:606.67px;color:#c4c4c4;font-size:12.5px;">5-10</div>
<div class="t" style="left:351.5px;top:606.67px;color:#c4c4c4;font-size:12.5px;">1.26</div>
<div class="r" style="left:393px;top:605px;width:3px;height:17px;background:#f2f2f2;box-sizing:border-box;border:1px solid #fdfdfd;box-shadow:0 0 0 1px #2c2c2c;"></div>
<div class="r" style="left:436.8px;top:603px;width:33.1px;height:20px;overflow:hidden;"><div class="t" style="left:0;top:3.67px;color:#c4c4c4;font-size:12.5px;">1.33</div></div>
<div class="r" style="left:478.5px;top:603px;width:34.4px;height:20px;overflow:hidden;"><div class="t" style="left:0;top:3.67px;color:#c4c4c4;font-size:12.5px;">0.12</div></div>
<div class="r" style="left:521.5px;top:603px;width:33.4px;height:20px;overflow:hidden;"><div class="t" style="left:0;top:3.67px;color:#c4c4c4;font-size:12.5px;">20.14</div></div>
<div class="r" style="left:563.2px;top:603px;width:33.7px;height:20px;overflow:hidden;"><div class="t" style="left:0;top:3.67px;color:#c4c4c4;font-size:12.5px;">20.01</div></div>
<div class="r" style="left:605.3px;top:603px;width:34.6px;height:20px;overflow:hidden;"><div class="t" style="left:0;top:3.67px;color:#c4c4c4;font-size:12.5px;">1889</div></div>
<div class="r" style="left:648.6px;top:603px;width:50.3px;height:20px;overflow:hidden;"><div class="t" style="left:0;top:3.67px;color:#c4c4c4;font-size:12.5px;">2</div></div>
<div class="r" style="left:707.3px;top:603px;width:67.6px;height:20px;overflow:hidden;"><div class="t" style="left:0;top:3.67px;color:#c4c4c4;font-size:12.5px;">1.02</div></div>
<div class="r" style="left:5px;top:623px;width:774px;height:20px;background:#363636;"></div>
<div class="r" style="left:6px;top:623px;width:299px;height:20px;overflow:hidden;"><div class="t" style="left:0;top:3.67px;color:#c4c4c4;font-size:12.5px;">CullSendEvents</div></div>
<div class="t" style="left:309.5px;top:626.67px;color:#c4c4c4;font-size:12.5px;">6-11</div>
<div class="t" style="left:351.5px;top:626.67px;color:#c4c4c4;font-size:12.5px;">1.16</div>
<div class="r" style="left:393px;top:625px;width:3px;height:17px;background:#f2f2f2;box-sizing:border-box;border:1px solid #fdfdfd;box-shadow:0 0 0 1px #2c2c2c;"></div>
<div class="r" style="left:436.8px;top:623px;width:33.1px;height:20px;overflow:hidden;"><div class="t" style="left:0;top:3.67px;color:#c4c4c4;font-size:12.5px;">1.21</div></div>
<div class="r" style="left:478.5px;top:623px;width:34.4px;height:20px;overflow:hidden;"><div class="t" style="left:0;top:3.67px;color:#c4c4c4;font-size:12.5px;">0.03</div></div>
<div class="r" style="left:521.5px;top:623px;width:33.4px;height:20px;overflow:hidden;"><div class="t" style="left:0;top:3.67px;color:#c4c4c4;font-size:12.5px;">20.03</div></div>
<div class="r" style="left:563.2px;top:623px;width:33.7px;height:20px;overflow:hidden;"><div class="t" style="left:0;top:3.67px;color:#c4c4c4;font-size:12.5px;">20.00</div></div>
<div class="r" style="left:605.3px;top:623px;width:34.6px;height:20px;overflow:hidden;"><div class="t" style="left:0;top:3.67px;color:#c4c4c4;font-size:12.5px;">1889</div></div>
<div class="r" style="left:648.6px;top:623px;width:50.3px;height:20px;overflow:hidden;"><div class="t" style="left:0;top:3.67px;color:#c4c4c4;font-size:12.5px;">2</div></div>
<div class="r" style="left:707.3px;top:623px;width:67.6px;height:20px;overflow:hidden;"><div class="t" style="left:0;top:3.67px;color:#c4c4c4;font-size:12.5px;">0.92</div></div>
<div class="r" style="left:5px;top:643px;width:774px;height:20px;background:#3f3f3f;"></div>
<div class="r" style="left:6px;top:643px;width:299px;height:20px;overflow:hidden;"><div class="t" style="left:0;top:3.67px;color:#c4c4c4;font-size:12.5px;">EarlyUpdate.UpdateTextureStreamingManager</div></div>
<div class="t" style="left:309.5px;top:646.67px;color:#c4c4c4;font-size:12.5px;">2</div>
<div class="t" style="left:351.5px;top:646.67px;color:#c4c4c4;font-size:12.5px;">1.04</div>
<div class="r" style="left:393px;top:645px;width:3px;height:17px;background:#f2f2f2;box-sizing:border-box;border:1px solid #fdfdfd;box-shadow:0 0 0 1px #2c2c2c;"></div>
<div class="r" style="left:436.8px;top:643px;width:33.1px;height:20px;overflow:hidden;"><div class="t" style="left:0;top:3.67px;color:#c4c4c4;font-size:12.5px;">0.92</div></div>
<div class="r" style="left:478.5px;top:643px;width:34.4px;height:20px;overflow:hidden;"><div class="t" style="left:0;top:3.67px;color:#c4c4c4;font-size:12.5px;">0.32</div></div>
<div class="r" style="left:521.5px;top:643px;width:33.4px;height:20px;overflow:hidden;"><div class="t" style="left:0;top:3.67px;color:#c4c4c4;font-size:12.5px;">2.22</div></div>
<div class="r" style="left:563.2px;top:643px;width:33.7px;height:20px;overflow:hidden;"><div class="t" style="left:0;top:3.67px;color:#c4c4c4;font-size:12.5px;">1.89</div></div>
<div class="r" style="left:605.3px;top:643px;width:34.6px;height:20px;overflow:hidden;"><div class="t" style="left:0;top:3.67px;color:#c4c4c4;font-size:12.5px;">1000</div></div>
<div class="r" style="left:648.6px;top:643px;width:50.3px;height:20px;overflow:hidden;"><div class="t" style="left:0;top:3.67px;color:#c4c4c4;font-size:12.5px;">1</div></div>
<div class="r" style="left:707.3px;top:643px;width:67.6px;height:20px;overflow:hidden;"><div class="t" style="left:0;top:3.67px;color:#c4c4c4;font-size:12.5px;">0.45</div></div>
<div class="r" style="left:5px;top:663px;width:774px;height:20px;background:#363636;"></div>
<div class="r" style="left:6px;top:663px;width:299px;height:20px;overflow:hidden;"><div class="t" style="left:0;top:3.67px;color:#c4c4c4;font-size:12.5px;">TextureStreamingManager.Update</div></div>
<div class="t" style="left:309.5px;top:666.67px;color:#c4c4c4;font-size:12.5px;">3</div>
<div class="t" style="left:351.5px;top:666.67px;color:#c4c4c4;font-size:12.5px;">1.04</div>
<div class="r" style="left:393px;top:665px;width:3px;height:17px;background:#f2f2f2;box-sizing:border-box;border:1px solid #fdfdfd;box-shadow:0 0 0 1px #2c2c2c;"></div>
<div class="r" style="left:436.8px;top:663px;width:33.1px;height:20px;overflow:hidden;"><div class="t" style="left:0;top:3.67px;color:#c4c4c4;font-size:12.5px;">0.92</div></div>
<div class="r" style="left:478.5px;top:663px;width:34.4px;height:20px;overflow:hidden;"><div class="t" style="left:0;top:3.67px;color:#c4c4c4;font-size:12.5px;">0.32</div></div>
<div class="r" style="left:521.5px;top:663px;width:33.4px;height:20px;overflow:hidden;"><div class="t" style="left:0;top:3.67px;color:#c4c4c4;font-size:12.5px;">2.22</div></div>
<div class="r" style="left:563.2px;top:663px;width:33.7px;height:20px;overflow:hidden;"><div class="t" style="left:0;top:3.67px;color:#c4c4c4;font-size:12.5px;">1.89</div></div>
<div class="r" style="left:605.3px;top:663px;width:34.6px;height:20px;overflow:hidden;"><div class="t" style="left:0;top:3.67px;color:#c4c4c4;font-size:12.5px;">1000</div></div>
<div class="r" style="left:648.6px;top:663px;width:50.3px;height:20px;overflow:hidden;"><div class="t" style="left:0;top:3.67px;color:#c4c4c4;font-size:12.5px;">1</div></div>
<div class="r" style="left:707.3px;top:663px;width:67.6px;height:20px;overflow:hidden;"><div class="t" style="left:0;top:3.67px;color:#c4c4c4;font-size:12.5px;">0.45</div></div>
<div class="r" style="left:5px;top:683px;width:774px;height:20px;background:#3f3f3f;"></div>
<div class="r" style="left:6px;top:683px;width:299px;height:20px;overflow:hidden;"><div class="t" style="left:0;top:3.67px;color:#c4c4c4;font-size:12.5px;">TextureStreamingManager.UpdateRenderers</div></div>
<div class="t" style="left:309.5px;top:686.67px;color:#c4c4c4;font-size:12.5px;">4</div>
<div class="t" style="left:351.5px;top:686.67px;color:#c4c4c4;font-size:12.5px;">1.00</div>
<div class="r" style="left:393px;top:685px;width:3px;height:17px;background:#f2f2f2;box-sizing:border-box;border:1px solid #fdfdfd;box-shadow:0 0 0 1px #2c2c2c;"></div>
<div class="r" style="left:436.8px;top:683px;width:33.1px;height:20px;overflow:hidden;"><div class="t" style="left:0;top:3.67px;color:#c4c4c4;font-size:12.5px;">0.88</div></div>
<div class="r" style="left:478.5px;top:683px;width:34.4px;height:20px;overflow:hidden;"><div class="t" style="left:0;top:3.67px;color:#c4c4c4;font-size:12.5px;">0.29</div></div>
<div class="r" style="left:521.5px;top:683px;width:33.4px;height:20px;overflow:hidden;"><div class="t" style="left:0;top:3.67px;color:#c4c4c4;font-size:12.5px;">2.14</div></div>
<div class="r" style="left:563.2px;top:683px;width:33.7px;height:20px;overflow:hidden;"><div class="t" style="left:0;top:3.67px;color:#c4c4c4;font-size:12.5px;">1.85</div></div>
<div class="r" style="left:605.3px;top:683px;width:34.6px;height:20px;overflow:hidden;"><div class="t" style="left:0;top:3.67px;color:#c4c4c4;font-size:12.5px;">1000</div></div>
<div class="r" style="left:648.6px;top:683px;width:50.3px;height:20px;overflow:hidden;"><div class="t" style="left:0;top:3.67px;color:#c4c4c4;font-size:12.5px;">1</div></div>
<div class="r" style="left:707.3px;top:683px;width:67.6px;height:20px;overflow:hidden;"><div class="t" style="left:0;top:3.67px;color:#c4c4c4;font-size:12.5px;">0.41</div></div>
<div class="r" style="left:5px;top:703px;width:774px;height:20px;background:#363636;"></div>
<div class="r" style="left:6px;top:703px;width:299px;height:20px;overflow:hidden;"><div class="t" style="left:0;top:3.67px;color:#c4c4c4;font-size:12.5px;">Assembly-CSharp-firstpass.dll!::WaterTile.OnWillRenderObject</div></div>
<div class="t" style="left:309.5px;top:706.67px;color:#c4c4c4;font-size:12.5px;">7</div>
<div class="t" style="left:351.5px;top:706.67px;color:#c4c4c4;font-size:12.5px;">0.97</div>
<div class="r" style="left:393px;top:705px;width:2px;height:17px;background:#f2f2f2;box-sizing:border-box;border:1px solid #fdfdfd;box-shadow:0 0 0 1px #2c2c2c;"></div>
<div class="r" style="left:436.8px;top:703px;width:33.1px;height:20px;overflow:hidden;"><div class="t" style="left:0;top:3.67px;color:#c4c4c4;font-size:12.5px;">1.05</div></div>
<div class="r" style="left:478.5px;top:703px;width:34.4px;height:20px;overflow:hidden;"><div class="t" style="left:0;top:3.67px;color:#c4c4c4;font-size:12.5px;">0.70</div></div>
<div class="r" style="left:521.5px;top:703px;width:33.4px;height:20px;overflow:hidden;"><div class="t" style="left:0;top:3.67px;color:#c4c4c4;font-size:12.5px;">11.15</div></div>
<div class="r" style="left:563.2px;top:703px;width:33.7px;height:20px;overflow:hidden;"><div class="t" style="left:0;top:3.67px;color:#c4c4c4;font-size:12.5px;">10.45</div></div>
<div class="r" style="left:605.3px;top:703px;width:34.6px;height:20px;overflow:hidden;"><div class="t" style="left:0;top:3.67px;color:#c4c4c4;font-size:12.5px;">889</div></div>
<div class="r" style="left:648.6px;top:703px;width:50.3px;height:20px;overflow:hidden;"><div class="t" style="left:0;top:3.67px;color:#c4c4c4;font-size:12.5px;">1</div></div>
<div class="r" style="left:707.3px;top:703px;width:67.6px;height:20px;overflow:hidden;"><div class="t" style="left:0;top:3.67px;color:#c4c4c4;font-size:12.5px;">0.79</div></div>
<div class="r" style="left:5px;top:723px;width:774px;height:20px;background:#3f3f3f;"></div>
<div class="r" style="left:6px;top:723px;width:299px;height:20px;overflow:hidden;"><div class="t" style="left:0;top:3.67px;color:#c4c4c4;font-size:12.5px;">Camera.CustomRender</div></div>
<div class="t" style="left:309.5px;top:726.67px;color:#c4c4c4;font-size:12.5px;">8</div>
<div class="t" style="left:351.5px;top:726.67px;color:#c4c4c4;font-size:12.5px;">0.88</div>
<div class="r" style="left:393px;top:725px;width:2px;height:17px;background:#f2f2f2;box-sizing:border-box;border:1px solid #fdfdfd;box-shadow:0 0 0 1px #2c2c2c;"></div>
<div class="r" style="left:436.8px;top:723px;width:33.1px;height:20px;overflow:hidden;"><div class="t" style="left:0;top:3.67px;color:#c4c4c4;font-size:12.5px;">0.96</div></div>
<div class="r" style="left:478.5px;top:723px;width:34.4px;height:20px;overflow:hidden;"><div class="t" style="left:0;top:3.67px;color:#c4c4c4;font-size:12.5px;">0.63</div></div>
<div class="r" style="left:521.5px;top:723px;width:33.4px;height:20px;overflow:hidden;"><div class="t" style="left:0;top:3.67px;color:#c4c4c4;font-size:12.5px;">11.06</div></div>
<div class="r" style="left:563.2px;top:723px;width:33.7px;height:20px;overflow:hidden;"><div class="t" style="left:0;top:3.67px;color:#c4c4c4;font-size:12.5px;">10.43</div></div>
<div class="r" style="left:605.3px;top:723px;width:34.6px;height:20px;overflow:hidden;"><div class="t" style="left:0;top:3.67px;color:#c4c4c4;font-size:12.5px;">889</div></div>
<div class="r" style="left:648.6px;top:723px;width:50.3px;height:20px;overflow:hidden;"><div class="t" style="left:0;top:3.67px;color:#c4c4c4;font-size:12.5px;">1</div></div>
<div class="r" style="left:707.3px;top:723px;width:67.6px;height:20px;overflow:hidden;"><div class="t" style="left:0;top:3.67px;color:#c4c4c4;font-size:12.5px;">0.70</div></div>
<div class="r" style="left:5px;top:743px;width:774px;height:20px;background:#363636;"></div>
<div class="r" style="left:6px;top:743px;width:299px;height:20px;overflow:hidden;"><div class="t" style="left:0;top:3.67px;color:#c4c4c4;font-size:12.5px;">Camera.ImageEffects</div></div>
<div class="t" style="left:309.5px;top:746.67px;color:#c4c4c4;font-size:12.5px;">4-10</div>
<div class="t" style="left:351.5px;top:746.67px;color:#c4c4c4;font-size:12.5px;">0.79</div>
<div class="r" style="left:393px;top:745px;width:2px;height:17px;background:#f2f2f2;box-sizing:border-box;border:1px solid #fdfdfd;box-shadow:0 0 0 1px #2c2c2c;"></div>
<div class="r" style="left:436.8px;top:743px;width:33.1px;height:20px;overflow:hidden;"><div class="t" style="left:0;top:3.67px;color:#c4c4c4;font-size:12.5px;">0.82</div></div>
<div class="r" style="left:478.5px;top:743px;width:34.4px;height:20px;overflow:hidden;"><div class="t" style="left:0;top:3.67px;color:#c4c4c4;font-size:12.5px;">0.62</div></div>
<div class="r" style="left:521.5px;top:743px;width:33.4px;height:20px;overflow:hidden;"><div class="t" style="left:0;top:3.67px;color:#c4c4c4;font-size:12.5px;">4.48</div></div>
<div class="r" style="left:563.2px;top:743px;width:33.7px;height:20px;overflow:hidden;"><div class="t" style="left:0;top:3.67px;color:#c4c4c4;font-size:12.5px;">3.86</div></div>
<div class="r" style="left:605.3px;top:743px;width:34.6px;height:20px;overflow:hidden;"><div class="t" style="left:0;top:3.67px;color:#c4c4c4;font-size:12.5px;">4778</div></div>
<div class="r" style="left:648.6px;top:743px;width:50.3px;height:20px;overflow:hidden;"><div class="t" style="left:0;top:3.67px;color:#c4c4c4;font-size:12.5px;">5</div></div>
<div class="r" style="left:707.3px;top:743px;width:67.6px;height:20px;overflow:hidden;"><div class="t" style="left:0;top:3.67px;color:#c4c4c4;font-size:12.5px;">0.90</div></div>
<div class="r" style="left:5px;top:763px;width:774px;height:20px;background:#3f3f3f;"></div>
<div class="r" style="left:6px;top:763px;width:299px;height:20px;overflow:hidden;"><div class="t" style="left:0;top:3.67px;color:#c4c4c4;font-size:12.5px;">BatchRenderer.Flush</div></div>
<div class="t" style="left:309.5px;top:766.67px;color:#c4c4c4;font-size:12.5px;">8-13</div>
<div class="t" style="left:351.5px;top:766.67px;color:#c4c4c4;font-size:12.5px;">0.72</div>
<div class="r" style="left:393px;top:765px;width:2px;height:17px;background:#f2f2f2;box-sizing:border-box;border:1px solid #fdfdfd;box-shadow:0 0 0 1px #2c2c2c;"></div>
<div class="r" style="left:436.8px;top:763px;width:33.1px;height:20px;overflow:hidden;"><div class="t" style="left:0;top:3.67px;color:#c4c4c4;font-size:12.5px;">0.85</div></div>
<div class="r" style="left:478.5px;top:763px;width:34.4px;height:20px;overflow:hidden;"><div class="t" style="left:0;top:3.67px;color:#c4c4c4;font-size:12.5px;">0.47</div></div>
<div class="r" style="left:521.5px;top:763px;width:33.4px;height:20px;overflow:hidden;"><div class="t" style="left:0;top:3.67px;color:#c4c4c4;font-size:12.5px;">15.02</div></div>
<div class="r" style="left:563.2px;top:763px;width:33.7px;height:20px;overflow:hidden;"><div class="t" style="left:0;top:3.67px;color:#c4c4c4;font-size:12.5px;">14.55</div></div>
<div class="r" style="left:605.3px;top:763px;width:34.6px;height:20px;overflow:hidden;"><div class="t" style="left:0;top:3.67px;color:#c4c4c4;font-size:12.5px;">112183</div></div>
<div class="r" style="left:648.6px;top:763px;width:50.3px;height:20px;overflow:hidden;"><div class="t" style="left:0;top:3.67px;color:#c4c4c4;font-size:12.5px;">112</div></div>
<div class="r" style="left:707.3px;top:763px;width:67.6px;height:20px;overflow:hidden;"><div class="t" style="left:0;top:3.67px;color:#c4c4c4;font-size:12.5px;">0.79</div></div>
<div class="r" style="left:5px;top:783px;width:774px;height:20px;background:#363636;"></div>
<div class="r" style="left:6px;top:783px;width:299px;height:20px;overflow:hidden;"><div class="t" style="left:0;top:3.67px;color:#c4c4c4;font-size:12.5px;">CullResults.CreateSharedRendererScene</div></div>
<div class="t" style="left:309.5px;top:786.67px;color:#c4c4c4;font-size:12.5px;">4-9</div>
<div class="t" style="left:351.5px;top:786.67px;color:#c4c4c4;font-size:12.5px;">0.69</div>
<div class="r" style="left:393px;top:785px;width:2px;height:17px;background:#f2f2f2;box-sizing:border-box;border:1px solid #fdfdfd;box-shadow:0 0 0 1px #2c2c2c;"></div>
<div class="r" style="left:436.8px;top:783px;width:33.1px;height:20px;overflow:hidden;"><div class="t" style="left:0;top:3.67px;color:#c4c4c4;font-size:12.5px;">0.76</div></div>
<div class="r" style="left:478.5px;top:783px;width:34.4px;height:20px;overflow:hidden;"><div class="t" style="left:0;top:3.67px;color:#c4c4c4;font-size:12.5px;">0.47</div></div>
<div class="r" style="left:521.5px;top:783px;width:33.4px;height:20px;overflow:hidden;"><div class="t" style="left:0;top:3.67px;color:#c4c4c4;font-size:12.5px;">3.04</div></div>
<div class="r" style="left:563.2px;top:783px;width:33.7px;height:20px;overflow:hidden;"><div class="t" style="left:0;top:3.67px;color:#c4c4c4;font-size:12.5px;">2.56</div></div>
<div class="r" style="left:605.3px;top:783px;width:34.6px;height:20px;overflow:hidden;"><div class="t" style="left:0;top:3.67px;color:#c4c4c4;font-size:12.5px;">1889</div></div>
<div class="r" style="left:648.6px;top:783px;width:50.3px;height:20px;overflow:hidden;"><div class="t" style="left:0;top:3.67px;color:#c4c4c4;font-size:12.5px;">2</div></div>
<div class="r" style="left:707.3px;top:783px;width:67.6px;height:20px;overflow:hidden;"><div class="t" style="left:0;top:3.67px;color:#c4c4c4;font-size:12.5px;">0.65</div></div>
<div class="r" style="left:5px;top:803px;width:774px;height:20px;background:#3f3f3f;"></div>
<div class="r" style="left:6px;top:803px;width:299px;height:20px;overflow:hidden;"><div class="t" style="left:0;top:3.67px;color:#c4c4c4;font-size:12.5px;">Terrain.Details.Render</div></div>
<div class="t" style="left:309.5px;top:806.67px;color:#c4c4c4;font-size:12.5px;">5</div>
<div class="t" style="left:351.5px;top:806.67px;color:#c4c4c4;font-size:12.5px;">0.63</div>
<div class="r" style="left:393px;top:805px;width:1px;height:17px;background:#f2f2f2;box-sizing:border-box;border:1px solid #fdfdfd;box-shadow:0 0 0 1px #2c2c2c;"></div>
<div class="r" style="left:436.8px;top:803px;width:33.1px;height:20px;overflow:hidden;"><div class="t" style="left:0;top:3.67px;color:#c4c4c4;font-size:12.5px;">0.67</div></div>
<div class="r" style="left:478.5px;top:803px;width:34.4px;height:20px;overflow:hidden;"><div class="t" style="left:0;top:3.67px;color:#c4c4c4;font-size:12.5px;">0.48</div></div>
<div class="r" style="left:521.5px;top:803px;width:33.4px;height:20px;overflow:hidden;"><div class="t" style="left:0;top:3.67px;color:#c4c4c4;font-size:12.5px;">2.02</div></div>
<div class="r" style="left:563.2px;top:803px;width:33.7px;height:20px;overflow:hidden;"><div class="t" style="left:0;top:3.67px;color:#c4c4c4;font-size:12.5px;">1.55</div></div>
<div class="r" style="left:605.3px;top:803px;width:34.6px;height:20px;overflow:hidden;"><div class="t" style="left:0;top:3.67px;color:#c4c4c4;font-size:12.5px;">1000</div></div>
<div class="r" style="left:648.6px;top:803px;width:50.3px;height:20px;overflow:hidden;"><div class="t" style="left:0;top:3.67px;color:#c4c4c4;font-size:12.5px;">1</div></div>
<div class="r" style="left:707.3px;top:803px;width:67.6px;height:20px;overflow:hidden;"><div class="t" style="left:0;top:3.67px;color:#c4c4c4;font-size:12.5px;">0.62</div></div>
<div class="r" style="left:5px;top:823px;width:774px;height:20px;background:#363636;"></div>
<div class="r" style="left:6px;top:823px;width:299px;height:20px;overflow:hidden;"><div class="t" style="left:0;top:3.67px;color:#c4c4c4;font-size:12.5px;">Render.TransparentGeometry</div></div>
<div class="t" style="left:309.5px;top:826.67px;color:#c4c4c4;font-size:12.5px;">5-10</div>
<div class="t" style="left:351.5px;top:826.67px;color:#c4c4c4;font-size:12.5px;">0.56</div>
<div class="r" style="left:393px;top:825px;width:1px;height:17px;background:#f2f2f2;box-sizing:border-box;border:1px solid #fdfdfd;box-shadow:0 0 0 1px #2c2c2c;"></div>
<div class="r" style="left:436.8px;top:823px;width:33.1px;height:20px;overflow:hidden;"><div class="t" style="left:0;top:3.67px;color:#c4c4c4;font-size:12.5px;">0.62</div></div>
<div class="r" style="left:478.5px;top:823px;width:34.4px;height:20px;overflow:hidden;"><div class="t" style="left:0;top:3.67px;color:#c4c4c4;font-size:12.5px;">0.25</div></div>
<div class="r" style="left:521.5px;top:823px;width:33.4px;height:20px;overflow:hidden;"><div class="t" style="left:0;top:3.67px;color:#c4c4c4;font-size:12.5px;">2.29</div></div>
<div class="r" style="left:563.2px;top:823px;width:33.7px;height:20px;overflow:hidden;"><div class="t" style="left:0;top:3.67px;color:#c4c4c4;font-size:12.5px;">2.05</div></div>
<div class="r" style="left:605.3px;top:823px;width:34.6px;height:20px;overflow:hidden;"><div class="t" style="left:0;top:3.67px;color:#c4c4c4;font-size:12.5px;">1889</div></div>
<div class="r" style="left:648.6px;top:823px;width:50.3px;height:20px;overflow:hidden;"><div class="t" style="left:0;top:3.67px;color:#c4c4c4;font-size:12.5px;">2</div></div>
<div class="r" style="left:707.3px;top:823px;width:67.6px;height:20px;overflow:hidden;"><div class="t" style="left:0;top:3.67px;color:#c4c4c4;font-size:12.5px;">0.60</div></div>
<div class="r" style="left:5px;top:843px;width:774px;height:20px;background:#3f3f3f;"></div>
<div class="r" style="left:6px;top:843px;width:299px;height:20px;overflow:hidden;"><div class="t" style="left:0;top:3.67px;color:#c4c4c4;font-size:12.5px;">EndRenderQueueExtraction</div></div>
<div class="t" style="left:309.5px;top:846.67px;color:#c4c4c4;font-size:12.5px;">5-10</div>
<div class="t" style="left:351.5px;top:846.67px;color:#c4c4c4;font-size:12.5px;">0.55</div>
<div class="r" style="left:393px;top:845px;width:1px;height:17px;background:#f2f2f2;box-sizing:border-box;border:1px solid #fdfdfd;box-shadow:0 0 0 1px #2c2c2c;"></div>
<div class="r" style="left:436.8px;top:843px;width:33.1px;height:20px;overflow:hidden;"><div class="t" style="left:0;top:3.67px;color:#c4c4c4;font-size:12.5px;">0.61</div></div>
<div class="r" style="left:478.5px;top:843px;width:34.4px;height:20px;overflow:hidden;"><div class="t" style="left:0;top:3.67px;color:#c4c4c4;font-size:12.5px;">0.13</div></div>
<div class="r" style="left:521.5px;top:843px;width:33.4px;height:20px;overflow:hidden;"><div class="t" style="left:0;top:3.67px;color:#c4c4c4;font-size:12.5px;">2.84</div></div>
<div class="r" style="left:563.2px;top:843px;width:33.7px;height:20px;overflow:hidden;"><div class="t" style="left:0;top:3.67px;color:#c4c4c4;font-size:12.5px;">2.71</div></div>
<div class="r" style="left:605.3px;top:843px;width:34.6px;height:20px;overflow:hidden;"><div class="t" style="left:0;top:3.67px;color:#c4c4c4;font-size:12.5px;">1889</div></div>
<div class="r" style="left:648.6px;top:843px;width:50.3px;height:20px;overflow:hidden;"><div class="t" style="left:0;top:3.67px;color:#c4c4c4;font-size:12.5px;">2</div></div>
<div class="r" style="left:707.3px;top:843px;width:67.6px;height:20px;overflow:hidden;"><div class="t" style="left:0;top:3.67px;color:#c4c4c4;font-size:12.5px;">0.52</div></div>
<div class="r" style="left:5px;top:863px;width:774px;height:20px;background:#363636;"></div>
<div class="r" style="left:6px;top:863px;width:299px;height:20px;overflow:hidden;"><div class="t" style="left:0;top:3.67px;color:#c4c4c4;font-size:12.5px;">RenderForward.RenderLoopJob</div></div>
<div class="t" style="left:309.5px;top:866.67px;color:#c4c4c4;font-size:12.5px;">7-12</div>
<div class="t" style="left:351.5px;top:866.67px;color:#c4c4c4;font-size:12.5px;">0.51</div>
<div class="r" style="left:393px;top:865px;width:1px;height:17px;background:#f2f2f2;box-sizing:border-box;border:1px solid #fdfdfd;box-shadow:0 0 0 1px #2c2c2c;"></div>
<div class="r" style="left:436.8px;top:863px;width:33.1px;height:20px;overflow:hidden;"><div class="t" style="left:0;top:3.67px;color:#c4c4c4;font-size:12.5px;">0.57</div></div>
<div class="r" style="left:478.5px;top:863px;width:34.4px;height:20px;overflow:hidden;"><div class="t" style="left:0;top:3.67px;color:#c4c4c4;font-size:12.5px;">0.12</div></div>
<div class="r" style="left:521.5px;top:863px;width:33.4px;height:20px;overflow:hidden;"><div class="t" style="left:0;top:3.67px;color:#c4c4c4;font-size:12.5px;">3.88</div></div>
<div class="r" style="left:563.2px;top:863px;width:33.7px;height:20px;overflow:hidden;"><div class="t" style="left:0;top:3.67px;color:#c4c4c4;font-size:12.5px;">3.76</div></div>
<div class="r" style="left:605.3px;top:863px;width:34.6px;height:20px;overflow:hidden;"><div class="t" style="left:0;top:3.67px;color:#c4c4c4;font-size:12.5px;">1889</div></div>
<div class="r" style="left:648.6px;top:863px;width:50.3px;height:20px;overflow:hidden;"><div class="t" style="left:0;top:3.67px;color:#c4c4c4;font-size:12.5px;">2</div></div>
<div class="r" style="left:707.3px;top:863px;width:67.6px;height:20px;overflow:hidden;"><div class="t" style="left:0;top:3.67px;color:#c4c4c4;font-size:12.5px;">0.47</div></div>
<div class="r" style="left:5px;top:883px;width:774px;height:20px;background:#3f3f3f;"></div>
<div class="r" style="left:6px;top:883px;width:299px;height:20px;overflow:hidden;"><div class="t" style="left:0;top:3.67px;color:#c4c4c4;font-size:12.5px;">Update.ScriptRunBehaviourUpdate</div></div>
<div class="t" style="left:309.5px;top:886.67px;color:#c4c4c4;font-size:12.5px;">2</div>
<div class="t" style="left:351.5px;top:886.67px;color:#c4c4c4;font-size:12.5px;">0.43</div>
<div class="r" style="left:393px;top:885px;width:1px;height:17px;background:#f2f2f2;box-sizing:border-box;border:1px solid #fdfdfd;box-shadow:0 0 0 1px #2c2c2c;"></div>
<div class="r" style="left:436.8px;top:883px;width:33.1px;height:20px;overflow:hidden;"><div class="t" style="left:0;top:3.67px;color:#c4c4c4;font-size:12.5px;">0.45</div></div>
<div class="r" style="left:478.5px;top:883px;width:34.4px;height:20px;overflow:hidden;"><div class="t" style="left:0;top:3.67px;color:#c4c4c4;font-size:12.5px;">0.33</div></div>
<div class="r" style="left:521.5px;top:883px;width:33.4px;height:20px;overflow:hidden;"><div class="t" style="left:0;top:3.67px;color:#c4c4c4;font-size:12.5px;">1.22</div></div>
<div class="r" style="left:563.2px;top:883px;width:33.7px;height:20px;overflow:hidden;"><div class="t" style="left:0;top:3.67px;color:#c4c4c4;font-size:12.5px;">0.89</div></div>
<div class="r" style="left:605.3px;top:883px;width:34.6px;height:20px;overflow:hidden;"><div class="t" style="left:0;top:3.67px;color:#c4c4c4;font-size:12.5px;">1000</div></div>
<div class="r" style="left:648.6px;top:883px;width:50.3px;height:20px;overflow:hidden;"><div class="t" style="left:0;top:3.67px;color:#c4c4c4;font-size:12.5px;">1</div></div>
<div class="r" style="left:707.3px;top:883px;width:67.6px;height:20px;overflow:hidden;"><div class="t" style="left:0;top:3.67px;color:#c4c4c4;font-size:12.5px;">0.62</div></div>
<div class="r" style="left:5px;top:903px;width:774px;height:20px;background:#363636;"></div>
<div class="r" style="left:6px;top:903px;width:299px;height:20px;overflow:hidden;"><div class="t" style="left:0;top:3.67px;color:#c4c4c4;font-size:12.5px;">BehaviourUpdate</div></div>
<div class="t" style="left:309.5px;top:906.67px;color:#c4c4c4;font-size:12.5px;">3</div>
<div class="t" style="left:351.5px;top:906.67px;color:#c4c4c4;font-size:12.5px;">0.43</div>
<div class="r" style="left:393px;top:905px;width:1px;height:17px;background:#f2f2f2;box-sizing:border-box;border:1px solid #fdfdfd;box-shadow:0 0 0 1px #2c2c2c;"></div>
<div class="r" style="left:436.8px;top:903px;width:33.1px;height:20px;overflow:hidden;"><div class="t" style="left:0;top:3.67px;color:#c4c4c4;font-size:12.5px;">0.45</div></div>
<div class="r" style="left:478.5px;top:903px;width:34.4px;height:20px;overflow:hidden;"><div class="t" style="left:0;top:3.67px;color:#c4c4c4;font-size:12.5px;">0.33</div></div>
<div class="r" style="left:521.5px;top:903px;width:33.4px;height:20px;overflow:hidden;"><div class="t" style="left:0;top:3.67px;color:#c4c4c4;font-size:12.5px;">1.22</div></div>
<div class="r" style="left:563.2px;top:903px;width:33.7px;height:20px;overflow:hidden;"><div class="t" style="left:0;top:3.67px;color:#c4c4c4;font-size:12.5px;">0.89</div></div>
<div class="r" style="left:605.3px;top:903px;width:34.6px;height:20px;overflow:hidden;"><div class="t" style="left:0;top:3.67px;color:#c4c4c4;font-size:12.5px;">1000</div></div>
<div class="r" style="left:648.6px;top:903px;width:50.3px;height:20px;overflow:hidden;"><div class="t" style="left:0;top:3.67px;color:#c4c4c4;font-size:12.5px;">1</div></div>
<div class="r" style="left:707.3px;top:903px;width:67.6px;height:20px;overflow:hidden;"><div class="t" style="left:0;top:3.67px;color:#c4c4c4;font-size:12.5px;">0.62</div></div>
<div class="r" style="left:5px;top:923px;width:774px;height:20px;background:#3f3f3f;"></div>
<div class="r" style="left:6px;top:923px;width:299px;height:20px;overflow:hidden;"><div class="t" style="left:0;top:3.67px;color:#c4c4c4;font-size:12.5px;">FindObjectsOfType</div></div>
<div class="t" style="left:309.5px;top:926.67px;color:#c4c4c4;font-size:12.5px;">2</div>
<div class="t" style="left:351.5px;top:926.67px;color:#c4c4c4;font-size:12.5px;">0.42</div>
<div class="r" style="left:393px;top:925px;width:1px;height:17px;background:#f2f2f2;box-sizing:border-box;border:1px solid #fdfdfd;box-shadow:0 0 0 1px #2c2c2c;"></div>
<div class="r" style="left:436.8px;top:923px;width:33.1px;height:20px;overflow:hidden;"><div class="t" style="left:0;top:3.67px;color:#c4c4c4;font-size:12.5px;">0.42</div></div>
<div class="r" style="left:478.5px;top:923px;width:34.4px;height:20px;overflow:hidden;"><div class="t" style="left:0;top:3.67px;color:#c4c4c4;font-size:12.5px;">0.42</div></div>
<div class="r" style="left:521.5px;top:923px;width:33.4px;height:20px;overflow:hidden;"><div class="t" style="left:0;top:3.67px;color:#c4c4c4;font-size:12.5px;">0.42</div></div>
<div class="r" style="left:563.2px;top:923px;width:33.7px;height:20px;overflow:hidden;"><div class="t" style="left:0;top:3.67px;color:#c4c4c4;font-size:12.5px;">0.00</div></div>
<div class="r" style="left:605.3px;top:923px;width:34.6px;height:20px;overflow:hidden;"><div class="t" style="left:0;top:3.67px;color:#c4c4c4;font-size:12.5px;">1</div></div>
<div class="r" style="left:648.6px;top:923px;width:50.3px;height:20px;overflow:hidden;"><div class="t" style="left:0;top:3.67px;color:#c4c4c4;font-size:12.5px;">1</div></div>
<div class="r" style="left:707.3px;top:923px;width:67.6px;height:20px;overflow:hidden;"><div class="t" style="left:0;top:3.67px;color:#c4c4c4;font-size:12.5px;">0.00</div></div>
<div class="r" style="left:5px;top:943px;width:774px;height:20px;background:#363636;"></div>
<div class="r" style="left:6px;top:943px;width:299px;height:20px;overflow:hidden;"><div class="t" style="left:0;top:3.67px;color:#c4c4c4;font-size:12.5px;">PostLateUpdate.ProfilerEndFrame</div></div>
<div class="t" style="left:309.5px;top:946.67px;color:#c4c4c4;font-size:12.5px;">2</div>
<div class="t" style="left:351.5px;top:946.67px;color:#c4c4c4;font-size:12.5px;">0.40</div>
<div class="r" style="left:393px;top:945px;width:1px;height:17px;background:#f2f2f2;box-sizing:border-box;border:1px solid #fdfdfd;box-shadow:0 0 0 1px #2c2c2c;"></div>
<div class="r" style="left:436.8px;top:943px;width:33.1px;height:20px;overflow:hidden;"><div class="t" style="left:0;top:3.67px;color:#c4c4c4;font-size:12.5px;">0.41</div></div>
<div class="r" style="left:478.5px;top:943px;width:34.4px;height:20px;overflow:hidden;"><div class="t" style="left:0;top:3.67px;color:#c4c4c4;font-size:12.5px;">0.33</div></div>
<div class="r" style="left:521.5px;top:943px;width:33.4px;height:20px;overflow:hidden;"><div class="t" style="left:0;top:3.67px;color:#c4c4c4;font-size:12.5px;">1.23</div></div>
<div class="r" style="left:563.2px;top:943px;width:33.7px;height:20px;overflow:hidden;"><div class="t" style="left:0;top:3.67px;color:#c4c4c4;font-size:12.5px;">0.90</div></div>
<div class="r" style="left:605.3px;top:943px;width:34.6px;height:20px;overflow:hidden;"><div class="t" style="left:0;top:3.67px;color:#c4c4c4;font-size:12.5px;">1000</div></div>
<div class="r" style="left:648.6px;top:943px;width:50.3px;height:20px;overflow:hidden;"><div class="t" style="left:0;top:3.67px;color:#c4c4c4;font-size:12.5px;">1</div></div>
<div class="r" style="left:707.3px;top:943px;width:67.6px;height:20px;overflow:hidden;"><div class="t" style="left:0;top:3.67px;color:#c4c4c4;font-size:12.5px;">0.40</div></div>
<div class="r" style="left:5px;top:963px;width:774px;height:20px;background:#3f3f3f;"></div>
<div class="r" style="left:6px;top:963px;width:299px;height:20px;overflow:hidden;"><div class="t" style="left:0;top:3.67px;color:#c4c4c4;font-size:12.5px;">Profiler.FlushCounters</div></div>
<div class="t" style="left:309.5px;top:966.67px;color:#c4c4c4;font-size:12.5px;">3</div>
<div class="t" style="left:351.5px;top:966.67px;color:#c4c4c4;font-size:12.5px;">0.40</div>
<div class="r" style="left:393px;top:965px;width:1px;height:17px;background:#f2f2f2;box-sizing:border-box;border:1px solid #fdfdfd;box-shadow:0 0 0 1px #2c2c2c;"></div>
<div class="r" style="left:436.8px;top:963px;width:33.1px;height:20px;overflow:hidden;"><div class="t" style="left:0;top:3.67px;color:#c4c4c4;font-size:12.5px;">0.41</div></div>
<div class="r" style="left:478.5px;top:963px;width:34.4px;height:20px;overflow:hidden;"><div class="t" style="left:0;top:3.67px;color:#c4c4c4;font-size:12.5px;">0.33</div></div>
<div class="r" style="left:521.5px;top:963px;width:33.4px;height:20px;overflow:hidden;"><div class="t" style="left:0;top:3.67px;color:#c4c4c4;font-size:12.5px;">1.23</div></div>
<div class="r" style="left:563.2px;top:963px;width:33.7px;height:20px;overflow:hidden;"><div class="t" style="left:0;top:3.67px;color:#c4c4c4;font-size:12.5px;">0.90</div></div>
<div class="r" style="left:605.3px;top:963px;width:34.6px;height:20px;overflow:hidden;"><div class="t" style="left:0;top:3.67px;color:#c4c4c4;font-size:12.5px;">1000</div></div>
<div class="r" style="left:648.6px;top:963px;width:50.3px;height:20px;overflow:hidden;"><div class="t" style="left:0;top:3.67px;color:#c4c4c4;font-size:12.5px;">1</div></div>
<div class="r" style="left:707.3px;top:963px;width:67.6px;height:20px;overflow:hidden;"><div class="t" style="left:0;top:3.67px;color:#c4c4c4;font-size:12.5px;">0.40</div></div>
<div class="r" style="left:5px;top:983px;width:774px;height:20px;background:#363636;"></div>
<div class="r" style="left:6px;top:983px;width:299px;height:20px;overflow:hidden;"><div class="t" style="left:0;top:3.67px;color:#c4c4c4;font-size:12.5px;">Graphics.Blit</div></div>
<div class="t" style="left:309.5px;top:986.67px;color:#c4c4c4;font-size:12.5px;">5-9</div>
<div class="t" style="left:351.5px;top:986.67px;color:#c4c4c4;font-size:12.5px;">0.34</div>
<div class="r" style="left:393px;top:985px;width:1px;height:17px;background:#f2f2f2;box-sizing:border-box;border:1px solid #fdfdfd;box-shadow:0 0 0 1px #2c2c2c;"></div>
<div class="r" style="left:436.8px;top:983px;width:33.1px;height:20px;overflow:hidden;"><div class="t" style="left:0;top:3.67px;color:#c4c4c4;font-size:12.5px;">0.35</div></div>
<div class="r" style="left:478.5px;top:983px;width:34.4px;height:20px;overflow:hidden;"><div class="t" style="left:0;top:3.67px;color:#c4c4c4;font-size:12.5px;">0.27</div></div>
<div class="r" style="left:521.5px;top:983px;width:33.4px;height:20px;overflow:hidden;"><div class="t" style="left:0;top:3.67px;color:#c4c4c4;font-size:12.5px;">1.77</div></div>
<div class="r" style="left:563.2px;top:983px;width:33.7px;height:20px;overflow:hidden;"><div class="t" style="left:0;top:3.67px;color:#c4c4c4;font-size:12.5px;">1.50</div></div>
<div class="r" style="left:605.3px;top:983px;width:34.6px;height:20px;overflow:hidden;"><div class="t" style="left:0;top:3.67px;color:#c4c4c4;font-size:12.5px;">8000</div></div>
<div class="r" style="left:648.6px;top:983px;width:50.3px;height:20px;overflow:hidden;"><div class="t" style="left:0;top:3.67px;color:#c4c4c4;font-size:12.5px;">8</div></div>
<div class="r" style="left:707.3px;top:983px;width:67.6px;height:20px;overflow:hidden;"><div class="t" style="left:0;top:3.67px;color:#c4c4c4;font-size:12.5px;">0.39</div></div>
<div class="r" style="left:5px;top:1003px;width:774px;height:20px;background:#3f3f3f;"></div>
<div class="r" style="left:6px;top:1003px;width:299px;height:20px;overflow:hidden;"><div class="t" style="left:0;top:3.67px;color:#c4c4c4;font-size:12.5px;">RenderForwardAlpha.Render</div></div>
<div class="t" style="left:309.5px;top:1006.67px;color:#c4c4c4;font-size:12.5px;">6-11</div>
<div class="t" style="left:351.5px;top:1006.67px;color:#c4c4c4;font-size:12.5px;">0.34</div>
<div class="r" style="left:393px;top:1005px;width:1px;height:17px;background:#f2f2f2;box-sizing:border-box;border:1px solid #fdfdfd;box-shadow:0 0 0 1px #2c2c2c;"></div>
<div class="r" style="left:436.8px;top:1003px;width:33.1px;height:20px;overflow:hidden;"><div class="t" style="left:0;top:3.67px;color:#c4c4c4;font-size:12.5px;">0.40</div></div>
<div class="r" style="left:478.5px;top:1003px;width:34.4px;height:20px;overflow:hidden;"><div class="t" style="left:0;top:3.67px;color:#c4c4c4;font-size:12.5px;">0.14</div></div>
<div class="r" style="left:521.5px;top:1003px;width:33.4px;height:20px;overflow:hidden;"><div class="t" style="left:0;top:3.67px;color:#c4c4c4;font-size:12.5px;">1.73</div></div>
<div class="r" style="left:563.2px;top:1003px;width:33.7px;height:20px;overflow:hidden;"><div class="t" style="left:0;top:3.67px;color:#c4c4c4;font-size:12.5px;">1.59</div></div>
<div class="r" style="left:605.3px;top:1003px;width:34.6px;height:20px;overflow:hidden;"><div class="t" style="left:0;top:3.67px;color:#c4c4c4;font-size:12.5px;">1889</div></div>
<div class="r" style="left:648.6px;top:1003px;width:50.3px;height:20px;overflow:hidden;"><div class="t" style="left:0;top:3.67px;color:#c4c4c4;font-size:12.5px;">2</div></div>
<div class="r" style="left:707.3px;top:1003px;width:67.6px;height:20px;overflow:hidden;"><div class="t" style="left:0;top:3.67px;color:#c4c4c4;font-size:12.5px;">0.37</div></div>
<div class="r" style="left:5px;top:1023px;width:774px;height:20px;background:#363636;"></div>
<div class="r" style="left:6px;top:1023px;width:299px;height:20px;overflow:hidden;"><div class="t" style="left:0;top:3.67px;color:#c4c4c4;font-size:12.5px;">Profiler.FlushMemoryCounters</div></div>
<div class="t" style="left:309.5px;top:1026.67px;color:#c4c4c4;font-size:12.5px;">4</div>
<div class="t" style="left:351.5px;top:1026.67px;color:#c4c4c4;font-size:12.5px;">0.32</div>
<div class="r" style="left:393px;top:1025px;width:1px;height:17px;background:#f2f2f2;box-sizing:border-box;border:1px solid #fdfdfd;box-shadow:0 0 0 1px #2c2c2c;"></div>
<div class="r" style="left:436.8px;top:1023px;width:33.1px;height:20px;overflow:hidden;"><div class="t" style="left:0;top:3.67px;color:#c4c4c4;font-size:12.5px;">0.32</div></div>
<div class="r" style="left:478.5px;top:1023px;width:34.4px;height:20px;overflow:hidden;"><div class="t" style="left:0;top:3.67px;color:#c4c4c4;font-size:12.5px;">0.26</div></div>
<div class="r" style="left:521.5px;top:1023px;width:33.4px;height:20px;overflow:hidden;"><div class="t" style="left:0;top:3.67px;color:#c4c4c4;font-size:12.5px;">1.05</div></div>
<div class="r" style="left:563.2px;top:1023px;width:33.7px;height:20px;overflow:hidden;"><div class="t" style="left:0;top:3.67px;color:#c4c4c4;font-size:12.5px;">0.79</div></div>
<div class="r" style="left:605.3px;top:1023px;width:34.6px;height:20px;overflow:hidden;"><div class="t" style="left:0;top:3.67px;color:#c4c4c4;font-size:12.5px;">1000</div></div>
<div class="r" style="left:648.6px;top:1023px;width:50.3px;height:20px;overflow:hidden;"><div class="t" style="left:0;top:3.67px;color:#c4c4c4;font-size:12.5px;">1</div></div>
<div class="r" style="left:707.3px;top:1023px;width:67.6px;height:20px;overflow:hidden;"><div class="t" style="left:0;top:3.67px;color:#c4c4c4;font-size:12.5px;">0.31</div></div>
<div class="r" style="left:5px;top:1043px;width:774px;height:20px;background:#3f3f3f;"></div>
<div class="r" style="left:6px;top:1043px;width:299px;height:20px;overflow:hidden;"><div class="t" style="left:0;top:3.67px;color:#c4c4c4;font-size:12.5px;">ScreenSpaceAmbientOcclusion</div></div>
<div class="t" style="left:309.5px;top:1046.67px;color:#c4c4c4;font-size:12.5px;">7</div>
<div class="t" style="left:351.5px;top:1046.67px;color:#c4c4c4;font-size:12.5px;">0.32</div>
<div class="r" style="left:393px;top:1045px;width:1px;height:17px;background:#f2f2f2;box-sizing:border-box;border:1px solid #fdfdfd;box-shadow:0 0 0 1px #2c2c2c;"></div>
<div class="r" style="left:436.8px;top:1043px;width:33.1px;height:20px;overflow:hidden;"><div class="t" style="left:0;top:3.67px;color:#c4c4c4;font-size:12.5px;">0.33</div></div>
<div class="r" style="left:478.5px;top:1043px;width:34.4px;height:20px;overflow:hidden;"><div class="t" style="left:0;top:3.67px;color:#c4c4c4;font-size:12.5px;">0.25</div></div>
<div class="r" style="left:521.5px;top:1043px;width:33.4px;height:20px;overflow:hidden;"><div class="t" style="left:0;top:3.67px;color:#c4c4c4;font-size:12.5px;">2.15</div></div>
<div class="r" style="left:563.2px;top:1043px;width:33.7px;height:20px;overflow:hidden;"><div class="t" style="left:0;top:3.67px;color:#c4c4c4;font-size:12.5px;">1.90</div></div>
<div class="r" style="left:605.3px;top:1043px;width:34.6px;height:20px;overflow:hidden;"><div class="t" style="left:0;top:3.67px;color:#c4c4c4;font-size:12.5px;">1000</div></div>
<div class="r" style="left:648.6px;top:1043px;width:50.3px;height:20px;overflow:hidden;"><div class="t" style="left:0;top:3.67px;color:#c4c4c4;font-size:12.5px;">1</div></div>
<div class="r" style="left:707.3px;top:1043px;width:67.6px;height:20px;overflow:hidden;"><div class="t" style="left:0;top:3.67px;color:#c4c4c4;font-size:12.5px;">0.36</div></div>
<div class="r" style="left:5px;top:1063px;width:774px;height:20px;background:#363636;"></div>
<div class="r" style="left:6px;top:1063px;width:299px;height:20px;overflow:hidden;"><div class="t" style="left:0;top:3.67px;color:#c4c4c4;font-size:12.5px;">Assembly-CSharp-firstpass.dll!::ScreenSpaceAmbientOcclusion.OnRenderImage</div></div>
<div class="t" style="left:309.5px;top:1066.67px;color:#c4c4c4;font-size:12.5px;">8</div>
<div class="t" style="left:351.5px;top:1066.67px;color:#c4c4c4;font-size:12.5px;">0.30</div>
<div class="r" style="left:393px;top:1065px;width:1px;height:17px;background:#f2f2f2;box-sizing:border-box;border:1px solid #fdfdfd;box-shadow:0 0 0 1px #2c2c2c;"></div>
<div class="r" style="left:436.8px;top:1063px;width:33.1px;height:20px;overflow:hidden;"><div class="t" style="left:0;top:3.67px;color:#c4c4c4;font-size:12.5px;">0.32</div></div>
<div class="r" style="left:478.5px;top:1063px;width:34.4px;height:20px;overflow:hidden;"><div class="t" style="left:0;top:3.67px;color:#c4c4c4;font-size:12.5px;">0.24</div></div>
<div class="r" style="left:521.5px;top:1063px;width:33.4px;height:20px;overflow:hidden;"><div class="t" style="left:0;top:3.67px;color:#c4c4c4;font-size:12.5px;">2.14</div></div>
<div class="r" style="left:563.2px;top:1063px;width:33.7px;height:20px;overflow:hidden;"><div class="t" style="left:0;top:3.67px;color:#c4c4c4;font-size:12.5px;">1.90</div></div>
<div class="r" style="left:605.3px;top:1063px;width:34.6px;height:20px;overflow:hidden;"><div class="t" style="left:0;top:3.67px;color:#c4c4c4;font-size:12.5px;">1000</div></div>
<div class="r" style="left:648.6px;top:1063px;width:50.3px;height:20px;overflow:hidden;"><div class="t" style="left:0;top:3.67px;color:#c4c4c4;font-size:12.5px;">1</div></div>
<div class="r" style="left:707.3px;top:1063px;width:67.6px;height:20px;overflow:hidden;"><div class="t" style="left:0;top:3.67px;color:#c4c4c4;font-size:12.5px;">0.35</div></div>
<div class="r" style="left:5px;top:1083px;width:774px;height:20px;background:#3f3f3f;"></div>
<div class="r" style="left:6px;top:1083px;width:299px;height:20px;overflow:hidden;"><div class="t" style="left:0;top:3.67px;color:#c4c4c4;font-size:12.5px;">UIEvents.IMGUIRenderOverlays</div></div>
<div class="t" style="left:309.5px;top:1086.67px;color:#c4c4c4;font-size:12.5px;">3</div>
<div class="t" style="left:351.5px;top:1086.67px;color:#c4c4c4;font-size:12.5px;">0.29</div>
<div class="r" style="left:393px;top:1085px;width:1px;height:17px;background:#f2f2f2;box-sizing:border-box;border:1px solid #fdfdfd;box-shadow:0 0 0 1px #2c2c2c;"></div>
<div class="r" style="left:436.8px;top:1083px;width:33.1px;height:20px;overflow:hidden;"><div class="t" style="left:0;top:3.67px;color:#c4c4c4;font-size:12.5px;">0.31</div></div>
<div class="r" style="left:478.5px;top:1083px;width:34.4px;height:20px;overflow:hidden;"><div class="t" style="left:0;top:3.67px;color:#c4c4c4;font-size:12.5px;">0.24</div></div>
<div class="r" style="left:521.5px;top:1083px;width:33.4px;height:20px;overflow:hidden;"><div class="t" style="left:0;top:3.67px;color:#c4c4c4;font-size:12.5px;">0.91</div></div>
<div class="r" style="left:563.2px;top:1083px;width:33.7px;height:20px;overflow:hidden;"><div class="t" style="left:0;top:3.67px;color:#c4c4c4;font-size:12.5px;">0.67</div></div>
<div class="r" style="left:605.3px;top:1083px;width:34.6px;height:20px;overflow:hidden;"><div class="t" style="left:0;top:3.67px;color:#c4c4c4;font-size:12.5px;">1000</div></div>
<div class="r" style="left:648.6px;top:1083px;width:50.3px;height:20px;overflow:hidden;"><div class="t" style="left:0;top:3.67px;color:#c4c4c4;font-size:12.5px;">1</div></div>
<div class="r" style="left:707.3px;top:1083px;width:67.6px;height:20px;overflow:hidden;"><div class="t" style="left:0;top:3.67px;color:#c4c4c4;font-size:12.5px;">0.31</div></div>
<div class="r" style="left:5px;top:1103px;width:774px;height:20px;background:#363636;"></div>
<div class="r" style="left:6px;top:1103px;width:299px;height:20px;overflow:hidden;"><div class="t" style="left:0;top:3.67px;color:#c4c4c4;font-size:12.5px;">GUI.Repaint</div></div>
<div class="t" style="left:309.5px;top:1106.67px;color:#c4c4c4;font-size:12.5px;">4</div>
<div class="t" style="left:351.5px;top:1106.67px;color:#c4c4c4;font-size:12.5px;">0.29</div>
<div class="r" style="left:393px;top:1105px;width:1px;height:17px;background:#f2f2f2;box-sizing:border-box;border:1px solid #fdfdfd;box-shadow:0 0 0 1px #2c2c2c;"></div>
<div class="r" style="left:436.8px;top:1103px;width:33.1px;height:20px;overflow:hidden;"><div class="t" style="left:0;top:3.67px;color:#c4c4c4;font-size:12.5px;">0.30</div></div>
<div class="r" style="left:478.5px;top:1103px;width:34.4px;height:20px;overflow:hidden;"><div class="t" style="left:0;top:3.67px;color:#c4c4c4;font-size:12.5px;">0.23</div></div>
<div class="r" style="left:521.5px;top:1103px;width:33.4px;height:20px;overflow:hidden;"><div class="t" style="left:0;top:3.67px;color:#c4c4c4;font-size:12.5px;">0.90</div></div>
<div class="r" style="left:563.2px;top:1103px;width:33.7px;height:20px;overflow:hidden;"><div class="t" style="left:0;top:3.67px;color:#c4c4c4;font-size:12.5px;">0.67</div></div>
<div class="r" style="left:605.3px;top:1103px;width:34.6px;height:20px;overflow:hidden;"><div class="t" style="left:0;top:3.67px;color:#c4c4c4;font-size:12.5px;">1000</div></div>
<div class="r" style="left:648.6px;top:1103px;width:50.3px;height:20px;overflow:hidden;"><div class="t" style="left:0;top:3.67px;color:#c4c4c4;font-size:12.5px;">1</div></div>
<div class="r" style="left:707.3px;top:1103px;width:67.6px;height:20px;overflow:hidden;"><div class="t" style="left:0;top:3.67px;color:#c4c4c4;font-size:12.5px;">0.31</div></div>
<div class="r" style="left:779px;top:463px;width:13px;height:663px;background:#353535;"></div>
<div class="r" style="left:779px;top:463px;width:1px;height:663px;background:#303030;"></div>
<svg style="position:absolute;left:782px;top:468.5px" width="9" height="5"><path d="M0 4.5H8L4 0Z" fill="#c8c8c8"/></svg>
<div class="r" style="left:781px;top:480px;width:10px;height:58px;background:#626262;border-radius:5px;"></div>
<svg style="position:absolute;left:782px;top:1116px" width="9" height="5"><path d="M0 0H8L4 4.3Z" fill="#c8c8c8"/></svg>
<div class="r" style="left:797px;top:47px;width:290px;height:348px;background:#323232;"></div>
<div class="r" style="left:797px;top:399px;width:290px;height:152px;background:#323232;"></div>
<div class="r" style="left:797px;top:555px;width:290px;height:572px;background:#323232;"></div>
<svg style="position:absolute;left:802px;top:56px" width="10" height="9"><path d="M0 0H9L4.5 8.5Z" fill="#6e6e6e"/></svg>
<div class="t" style="left:814.3px;top:52.97px;color:#d2d2d2;font-size:12.2px;font-weight:700;">Frame Summary</div>
<div class="t" style="left:804.4px;top:93.17px;color:#c4c4c4;font-size:12.5px;">Frame Count</div>
<div class="t" style="left:907.4px;top:93.17px;color:#c4c4c4;font-size:12.5px;">1000</div>
<div class="t" style="left:804.4px;top:113.07px;color:#c4c4c4;font-size:12.5px;">Start</div>
<div class="t" style="left:907.4px;top:113.07px;color:#c4c4c4;font-size:12.5px;">1</div>
<div class="r" style="left:961.8px;top:111px;width:49px;height:17px;background:#3f3f3f;border-radius:3px;"></div>
<div class="t" style="left:961.8px;width:49px;text-align:center;top:113.17px;color:#8c8c8c;font-size:12.5px;">1</div>
<div class="t" style="left:804.4px;top:133.87px;color:#c4c4c4;font-size:12.5px;">End</div>
<div class="t" style="left:907.4px;top:133.87px;color:#c4c4c4;font-size:12.5px;">1000</div>
<div class="r" style="left:961.8px;top:132px;width:49px;height:17px;background:#3f3f3f;border-radius:3px;"></div>
<div class="t" style="left:961.8px;width:49px;text-align:center;top:134.17px;color:#8c8c8c;font-size:12.5px;">1000</div>
<div class="t" style="left:907.4px;top:175.37px;color:#c4c4c4;font-size:12.5px;">ms</div>
<div class="t" style="left:961.8px;top:175.37px;color:#c4c4c4;font-size:12.5px;">Frame</div>
<div class="t" style="left:804.4px;top:195.77px;color:#c4c4c4;font-size:12.5px;">Max</div>
<div class="t" style="left:907.4px;top:195.77px;color:#c4c4c4;font-size:12.5px;">40.20</div>
<div class="r" style="left:961.8px;top:193px;width:49px;height:17px;background:#3f3f3f;border-radius:3px;"></div>
<div class="t" style="left:961.8px;width:49px;text-align:center;top:195.17px;color:#8c8c8c;font-size:12.5px;">915</div>
<div class="t" style="left:804.4px;top:216.11px;color:#c4c4c4;font-size:12.5px;">Upper Quartile</div>
<div class="t" style="left:907.4px;top:216.11px;color:#c4c4c4;font-size:12.5px;">14.32</div>
<div class="t" style="left:804.4px;top:236.45px;color:#c4c4c4;font-size:12.5px;">Median</div>
<div class="t" style="left:907.4px;top:236.45px;color:#c4c4c4;font-size:12.5px;">12.58</div>
<div class="r" style="left:961.8px;top:234px;width:49px;height:17px;background:#3f3f3f;border-radius:3px;"></div>
<div class="t" style="left:961.8px;width:49px;text-align:center;top:236.17px;color:#8c8c8c;font-size:12.5px;">450</div>
<div class="t" style="left:804.4px;top:256.79px;color:#c4c4c4;font-size:12.5px;">Mean</div>
<div class="t" style="left:907.4px;top:256.79px;color:#c4c4c4;font-size:12.5px;">13.36</div>
<div class="t" style="left:804.4px;top:277.13px;color:#c4c4c4;font-size:12.5px;">Lower Quartile</div>
<div class="t" style="left:907.4px;top:277.13px;color:#c4c4c4;font-size:12.5px;">11.61</div>
<div class="t" style="left:804.4px;top:297.47px;color:#c4c4c4;font-size:12.5px;">Min</div>
<div class="t" style="left:907.4px;top:297.47px;color:#c4c4c4;font-size:12.5px;">8.79</div>
<div class="r" style="left:961.8px;top:295px;width:49px;height:17px;background:#3f3f3f;border-radius:3px;"></div>
<div class="t" style="left:961.8px;width:49px;text-align:center;top:297.17px;color:#8c8c8c;font-size:12.5px;">339</div>
<div class="r" style="left:801px;top:330px;width:6px;height:40px;background:#7f7f7f;"></div>
<div class="r" style="left:809px;top:330px;width:6px;height:40px;background:#7f7f7f;"></div>
<div class="r" style="left:816px;top:330px;width:6px;height:40px;background:#7f7f7f;"></div>
<div class="r" style="left:824px;top:330px;width:6px;height:40px;background:#7f7f7f;"></div>
<div class="r" style="left:832px;top:330px;width:6px;height:40px;background:#7f7f7f;"></div>
<div class="r" style="left:832px;top:369px;width:6px;height:1px;background:#f0f0f0;"></div>
<div class="r" style="left:840px;top:330px;width:6px;height:40px;background:#7f7f7f;"></div>
<div class="r" style="left:840px;top:356px;width:6px;height:14px;background:#f0f0f0;"></div>
<div class="r" style="left:847px;top:330px;width:6px;height:40px;background:#7f7f7f;"></div>
<div class="r" style="left:847px;top:356px;width:6px;height:14px;background:#f0f0f0;"></div>
<div class="r" style="left:855px;top:330px;width:6px;height:40px;background:#7f7f7f;"></div>
<div class="r" style="left:855px;top:363px;width:6px;height:7px;background:#f0f0f0;"></div>
<div class="r" style="left:863px;top:330px;width:6px;height:40px;background:#7f7f7f;"></div>
<div class="r" style="left:863px;top:368px;width:6px;height:2px;background:#f0f0f0;"></div>
<div class="r" style="left:870px;top:330px;width:6px;height:40px;background:#7f7f7f;"></div>
<div class="r" style="left:870px;top:369px;width:6px;height:1px;background:#f0f0f0;"></div>
<div class="r" style="left:878px;top:330px;width:6px;height:40px;background:#7f7f7f;"></div>
<div class="r" style="left:878px;top:369px;width:6px;height:1px;background:#f0f0f0;"></div>
<div class="r" style="left:886px;top:330px;width:6px;height:40px;background:#7f7f7f;"></div>
<div class="r" style="left:886px;top:369px;width:6px;height:1px;background:#f0f0f0;"></div>
<div class="r" style="left:893px;top:330px;width:6px;height:40px;background:#7f7f7f;"></div>
<div class="r" style="left:893px;top:369px;width:6px;height:1px;background:#f0f0f0;"></div>
<div class="r" style="left:901px;top:330px;width:6px;height:40px;background:#7f7f7f;"></div>
<div class="r" style="left:901px;top:369px;width:6px;height:1px;background:#f0f0f0;"></div>
<div class="r" style="left:909px;top:330px;width:6px;height:40px;background:#7f7f7f;"></div>
<div class="r" style="left:909px;top:369px;width:6px;height:1px;background:#f0f0f0;"></div>
<div class="r" style="left:916px;top:330px;width:6px;height:40px;background:#7f7f7f;"></div>
<div class="r" style="left:924px;top:330px;width:6px;height:40px;background:#7f7f7f;"></div>
<div class="r" style="left:924px;top:369px;width:6px;height:1px;background:#f0f0f0;"></div>
<div class="r" style="left:932px;top:330px;width:6px;height:40px;background:#7f7f7f;"></div>
<div class="r" style="left:932px;top:369px;width:6px;height:1px;background:#f0f0f0;"></div>
<div class="r" style="left:940px;top:330px;width:6px;height:40px;background:#7f7f7f;"></div>
<div class="r" style="left:940px;top:369px;width:6px;height:1px;background:#f0f0f0;"></div>
<div class="r" style="left:947px;top:330px;width:6px;height:40px;background:#7f7f7f;"></div>
<div class="r" style="left:947px;top:369px;width:6px;height:1px;background:#f0f0f0;"></div>
<div class="r" style="left:963px;top:330px;width:46px;height:40px;background:#6a6a6a;"></div>
<div class="r" style="left:985px;top:331px;width:1px;height:31px;background:#f0f0f0;"></div>
<div class="r" style="left:980px;top:330px;width:12px;height:1px;background:#f0f0f0;"></div>
<div class="r" style="left:980px;top:361px;width:12px;height:1px;background:#f0f0f0;"></div>
<div class="r" style="left:974px;top:356px;width:24px;height:3px;background:#f0f0f0;"></div>
<div class="t" style="left:1014.6px;top:328.67px;color:#c4c4c4;font-size:12.5px;">40.202</div>
<div class="t" style="left:1014.6px;top:357.77px;color:#c4c4c4;font-size:12.5px;">8.7865</div>
<div class="t" style="left:800.5px;top:375.17px;color:#c4c4c4;font-size:12.5px;">0</div>
<div class="t" style="left:891.7px;width:60px;text-align:right;top:375.17px;color:#c4c4c4;font-size:12.5px;">40.202</div>
<svg style="position:absolute;left:802px;top:408px" width="10" height="9"><path d="M0 0H9L4.5 8.5Z" fill="#6e6e6e"/></svg>
<div class="t" style="left:814.3px;top:405.47px;color:#d2d2d2;font-size:12.2px;font-weight:700;">Thread Summary</div>
<div class="t" style="left:804.4px;top:445.47px;color:#c4c4c4;font-size:12.5px;">Total Count :</div>
<div class="t" style="left:907.4px;top:445.47px;color:#c4c4c4;font-size:12.5px;">47</div>
<div class="t" style="left:804.4px;top:465.47px;color:#c4c4c4;font-size:12.5px;">Selected :</div>
<div class="t" style="left:907.4px;top:465.47px;color:#c4c4c4;font-size:12.5px;">1</div>
<div class="t" style="left:804.4px;top:484.77px;color:#c4c4c4;font-size:12.5px;">Graph Scale :</div>
<div class="r" style="left:907px;top:483px;width:158px;height:16px;background:#505050;border-radius:3px;box-shadow:0 1px 0 #262626;"></div>
<div class="t" style="left:911px;top:483.67px;color:#d0d0d0;font-size:12.5px;">Upper quartile</div>
<svg style="position:absolute;left:1052px;top:489.0px" width="8" height="5"><path d="M0 0H7.5L3.75 4.2Z" fill="#c4c4c4"/></svg>
<div class="t" style="left:907.4px;top:505.57px;color:#c4c4c4;font-size:12.5px;">Median</div>
<div class="t" style="left:962.8px;top:505.57px;color:#c4c4c4;font-size:12.5px;">Thread</div>
<div class="r" style="left:804px;top:524px;width:100px;height:15px;background:#6a6a6a;"></div>
<div class="r" style="left:865px;top:531px;width:19px;height:1px;background:#f0f0f0;"></div>
<div class="r" style="left:865px;top:529px;width:1px;height:5px;background:#f0f0f0;"></div>
<div class="r" style="left:884px;top:527px;width:20px;height:9px;background:#808080;box-sizing:border-box;border:1px solid #f4f4f4;border-radius:1px;"></div>
<div class="r" style="left:891px;top:527px;width:2px;height:9px;background:#f4f4f4;"></div>
<div class="t" style="left:908.9px;top:527.07px;color:#c4c4c4;font-size:12.5px;">12.54</div>
<div class="t" style="left:964.2px;top:527.07px;color:#c4c4c4;font-size:12.5px;">Main Thread</div>
<svg style="position:absolute;left:802px;top:564px" width="10" height="9"><path d="M0 0H9L4.5 8.5Z" fill="#6e6e6e"/></svg>
<div class="t" style="left:814.3px;top:560.97px;color:#d2d2d2;font-size:12.2px;font-weight:700;">Marker Summary</div>
<div class="t" style="left:804.4px;top:581.47px;color:#c4c4c4;font-size:12.5px;">PlayerLoop</div>
<div class="t" style="left:804.4px;top:601.37px;color:#c4c4c4;font-size:12.5px;">Mean frame contribution</div>
<div class="r" style="left:804px;top:640px;width:100px;height:13px;background:#f0f0f0;"></div>
<div class="t" style="left:909px;top:641.47px;color:#c4c4c4;font-size:12.5px;">99.72%</div>
<div class="t" style="left:804.4px;top:664.67px;color:#c4c4c4;font-size:12.5px;">First frame</div>
<div class="r" style="left:961.8px;top:663px;width:49px;height:17px;background:#3f3f3f;border-radius:3px;"></div>
<div class="t" style="left:961.8px;width:49px;text-align:center;top:665.17px;color:#8c8c8c;font-size:12.5px;">1</div>
<div class="t" style="left:804.4px;top:686.27px;color:#c4c4c4;font-size:12.5px;">Top</div>
<div class="r" style="left:837px;top:684px;width:38px;height:16px;background:#505050;border-radius:3px;box-shadow:0 1px 0 #262626;"></div>
<div class="t" style="left:841px;top:685.17px;color:#d0d0d0;font-size:12.5px;">3</div>
<svg style="position:absolute;left:862px;top:690.0px" width="8" height="5"><path d="M0 0H7.5L3.75 4.2Z" fill="#c4c4c4"/></svg>
<div class="t" style="left:883.5px;top:686.27px;color:#c4c4c4;font-size:12.5px;">by frame costs</div>
<div class="r" style="left:804px;top:705px;width:100px;height:13px;background:#7f7f7f;"></div>
<div class="r" style="left:804px;top:705px;width:100px;height:13px;background:#f0f0f0;"></div>
<div class="t" style="left:909px;top:706.37px;color:#c4c4c4;font-size:12.5px;">40.2ms</div>
<div class="r" style="left:963.7px;top:704px;width:49px;height:17px;background:#3f3f3f;border-radius:3px;"></div>
<div class="t" style="left:963.7px;width:49px;text-align:center;top:706.17px;color:#8c8c8c;font-size:12.5px;">915</div>
<div class="r" style="left:804px;top:726px;width:100px;height:13px;background:#7f7f7f;"></div>
<div class="r" style="left:804px;top:726px;width:99px;height:13px;background:#f0f0f0;"></div>
<div class="t" style="left:909px;top:727.37px;color:#c4c4c4;font-size:12.5px;">39.9ms</div>
<div class="r" style="left:963.7px;top:725px;width:49px;height:17px;background:#3f3f3f;border-radius:3px;"></div>
<div class="t" style="left:963.7px;width:49px;text-align:center;top:727.17px;color:#8c8c8c;font-size:12.5px;">918</div>
<div class="r" style="left:804px;top:747px;width:100px;height:13px;background:#7f7f7f;"></div>
<div class="r" style="left:804px;top:747px;width:91px;height:13px;background:#f0f0f0;"></div>
<div class="t" style="left:909px;top:748.37px;color:#c4c4c4;font-size:12.5px;">36.7ms</div>
<div class="r" style="left:963.7px;top:746px;width:49px;height:17px;background:#3f3f3f;border-radius:3px;"></div>
<div class="t" style="left:963.7px;width:49px;text-align:center;top:748.17px;color:#8c8c8c;font-size:12.5px;">917</div>
<div class="r" style="left:801px;top:783px;width:6px;height:100px;background:#7f7f7f;"></div>
<div class="r" style="left:801px;top:879px;width:6px;height:4px;background:#f0f0f0;"></div>
<div class="r" style="left:809px;top:783px;width:6px;height:100px;background:#7f7f7f;"></div>
<div class="r" style="left:809px;top:852px;width:6px;height:31px;background:#f0f0f0;"></div>
<div class="r" style="left:816px;top:783px;width:6px;height:100px;background:#7f7f7f;"></div>
<div class="r" style="left:816px;top:850px;width:6px;height:33px;background:#f0f0f0;"></div>
<div class="r" style="left:824px;top:783px;width:6px;height:100px;background:#7f7f7f;"></div>
<div class="r" style="left:824px;top:867px;width:6px;height:16px;background:#f0f0f0;"></div>
<div class="r" style="left:832px;top:783px;width:6px;height:100px;background:#7f7f7f;"></div>
<div class="r" style="left:832px;top:874px;width:6px;height:9px;background:#f0f0f0;"></div>
<div class="r" style="left:840px;top:783px;width:6px;height:100px;background:#7f7f7f;"></div>
<div class="r" style="left:840px;top:879px;width:6px;height:4px;background:#f0f0f0;"></div>
<div class="r" style="left:847px;top:783px;width:6px;height:100px;background:#7f7f7f;"></div>
<div class="r" style="left:847px;top:881px;width:6px;height:2px;background:#f0f0f0;"></div>
<div class="r" style="left:855px;top:783px;width:6px;height:100px;background:#7f7f7f;"></div>
<div class="r" style="left:855px;top:882px;width:6px;height:1px;background:#f0f0f0;"></div>
<div class="r" style="left:863px;top:783px;width:6px;height:100px;background:#7f7f7f;"></div>
<div class="r" style="left:863px;top:882px;width:6px;height:1px;background:#f0f0f0;"></div>
<div class="r" style="left:870px;top:783px;width:6px;height:100px;background:#7f7f7f;"></div>
<div class="r" style="left:870px;top:882px;width:6px;height:1px;background:#f0f0f0;"></div>
<div class="r" style="left:878px;top:783px;width:6px;height:100px;background:#7f7f7f;"></div>
<div class="r" style="left:878px;top:882px;width:6px;height:1px;background:#f0f0f0;"></div>
<div class="r" style="left:886px;top:783px;width:6px;height:100px;background:#7f7f7f;"></div>
<div class="r" style="left:886px;top:882px;width:6px;height:1px;background:#f0f0f0;"></div>
<div class="r" style="left:893px;top:783px;width:6px;height:100px;background:#7f7f7f;"></div>
<div class="r" style="left:893px;top:882px;width:6px;height:1px;background:#f0f0f0;"></div>
<div class="r" style="left:901px;top:783px;width:6px;height:100px;background:#7f7f7f;"></div>
<div class="r" style="left:901px;top:882px;width:6px;height:1px;background:#f0f0f0;"></div>
<div class="r" style="left:909px;top:783px;width:6px;height:100px;background:#7f7f7f;"></div>
<div class="r" style="left:909px;top:882px;width:6px;height:1px;background:#f0f0f0;"></div>
<div class="r" style="left:916px;top:783px;width:6px;height:100px;background:#7f7f7f;"></div>
<div class="r" style="left:916px;top:882px;width:6px;height:1px;background:#f0f0f0;"></div>
<div class="r" style="left:924px;top:783px;width:6px;height:100px;background:#7f7f7f;"></div>
<div class="r" style="left:924px;top:882px;width:6px;height:1px;background:#f0f0f0;"></div>
<div class="r" style="left:932px;top:783px;width:6px;height:100px;background:#7f7f7f;"></div>
<div class="r" style="left:932px;top:882px;width:6px;height:1px;background:#f0f0f0;"></div>
<div class="r" style="left:940px;top:783px;width:6px;height:100px;background:#7f7f7f;"></div>
<div class="r" style="left:940px;top:882px;width:6px;height:1px;background:#f0f0f0;"></div>
<div class="r" style="left:947px;top:783px;width:6px;height:100px;background:#7f7f7f;"></div>
<div class="r" style="left:947px;top:882px;width:6px;height:1px;background:#f0f0f0;"></div>
<div class="r" style="left:963px;top:783px;width:46px;height:100px;background:#6a6a6a;"></div>
<div class="r" style="left:985px;top:784px;width:1px;height:98px;background:#f0f0f0;"></div>
<div class="r" style="left:980px;top:783px;width:12px;height:1px;background:#f0f0f0;"></div>
<div class="r" style="left:980px;top:882px;width:12px;height:1px;background:#f0f0f0;"></div>
<div class="r" style="left:974px;top:865px;width:24px;height:10px;background:transparent;box-sizing:border-box;border:1px solid #f0f0f0;border-radius:2px;"></div>
<div class="r" style="left:974px;top:869px;width:24px;height:2px;background:#f0f0f0;"></div>
<div class="t" style="left:1014.6px;top:782.37px;color:#c4c4c4;font-size:12.5px;">40.163</div>
<div class="t" style="left:1014.6px;top:871.17px;color:#c4c4c4;font-size:12.5px;">8.7578</div>
<div class="t" style="left:801px;top:888.27px;color:#c4c4c4;font-size:12.5px;">8.7578</div>
<div class="t" style="left:889.8px;width:60px;text-align:right;top:888.27px;color:#c4c4c4;font-size:12.5px;">40.163</div>
<div class="t" style="left:907.4px;top:925.07px;color:#c4c4c4;font-size:12.5px;">ms</div>
<div class="t" style="left:961.8px;top:925.07px;color:#c4c4c4;font-size:12.5px;">Frame</div>
<div class="t" style="left:804.4px;top:945.27px;color:#c4c4c4;font-size:12.5px;">Max</div>
<div class="t" style="left:907.4px;top:945.27px;color:#c4c4c4;font-size:12.5px;">40.16</div>
<div class="r" style="left:961.8px;top:943px;width:49px;height:17px;background:#3f3f3f;border-radius:3px;"></div>
<div class="t" style="left:961.8px;width:49px;text-align:center;top:945.17px;color:#8c8c8c;font-size:12.5px;">915</div>
<div class="t" style="left:804.4px;top:965.63px;color:#c4c4c4;font-size:12.5px;">Upper Quartile</div>
<div class="t" style="left:907.4px;top:965.63px;color:#c4c4c4;font-size:12.5px;">14.29</div>
<div class="t" style="left:804.4px;top:985.99px;color:#c4c4c4;font-size:12.5px;">Median</div>
<div class="t" style="left:907.4px;top:985.99px;color:#c4c4c4;font-size:12.5px;">12.54</div>
<div class="r" style="left:961.8px;top:983px;width:49px;height:17px;background:#3f3f3f;border-radius:3px;"></div>
<div class="t" style="left:961.8px;width:49px;text-align:center;top:985.17px;color:#8c8c8c;font-size:12.5px;">976</div>
<div class="t" style="left:804.4px;top:1006.35px;color:#c4c4c4;font-size:12.5px;">Mean</div>
<div class="t" style="left:907.4px;top:1006.35px;color:#c4c4c4;font-size:12.5px;">13.32</div>
<div class="t" style="left:804.4px;top:1026.71px;color:#c4c4c4;font-size:12.5px;">Lower Quartile</div>
<div class="t" style="left:907.4px;top:1026.71px;color:#c4c4c4;font-size:12.5px;">11.57</div>
<div class="t" style="left:804.4px;top:1047.07px;color:#c4c4c4;font-size:12.5px;">Min</div>
<div class="t" style="left:907.4px;top:1047.07px;color:#c4c4c4;font-size:12.5px;">8.76</div>
<div class="r" style="left:961.8px;top:1044px;width:49px;height:17px;background:#3f3f3f;border-radius:3px;"></div>
<div class="t" style="left:961.8px;width:49px;text-align:center;top:1046.17px;color:#8c8c8c;font-size:12.5px;">339</div>
<div class="t" style="left:804.4px;top:1082.67px;color:#c4c4c4;font-size:12.5px;">Individual Max</div>
<div class="t" style="left:907.4px;top:1082.67px;color:#c4c4c4;font-size:12.5px;">40.16</div>
<div class="r" style="left:961.8px;top:1081px;width:49px;height:17px;background:#3f3f3f;border-radius:3px;"></div>
<div class="t" style="left:961.8px;width:49px;text-align:center;top:1083.17px;color:#8c8c8c;font-size:12.5px;">915</div>
<div class="t" style="left:804.4px;top:1103.67px;color:#c4c4c4;font-size:12.5px;">Individual Min</div>
<div class="t" style="left:907.4px;top:1103.67px;color:#c4c4c4;font-size:12.5px;">8.76</div>
<div class="r" style="left:961.8px;top:1102px;width:49px;height:17px;background:#3f3f3f;border-radius:3px;"></div>
<div class="t" style="left:961.8px;width:49px;text-align:center;top:1104.17px;color:#8c8c8c;font-size:12.5px;">339</div>
</body></html>
